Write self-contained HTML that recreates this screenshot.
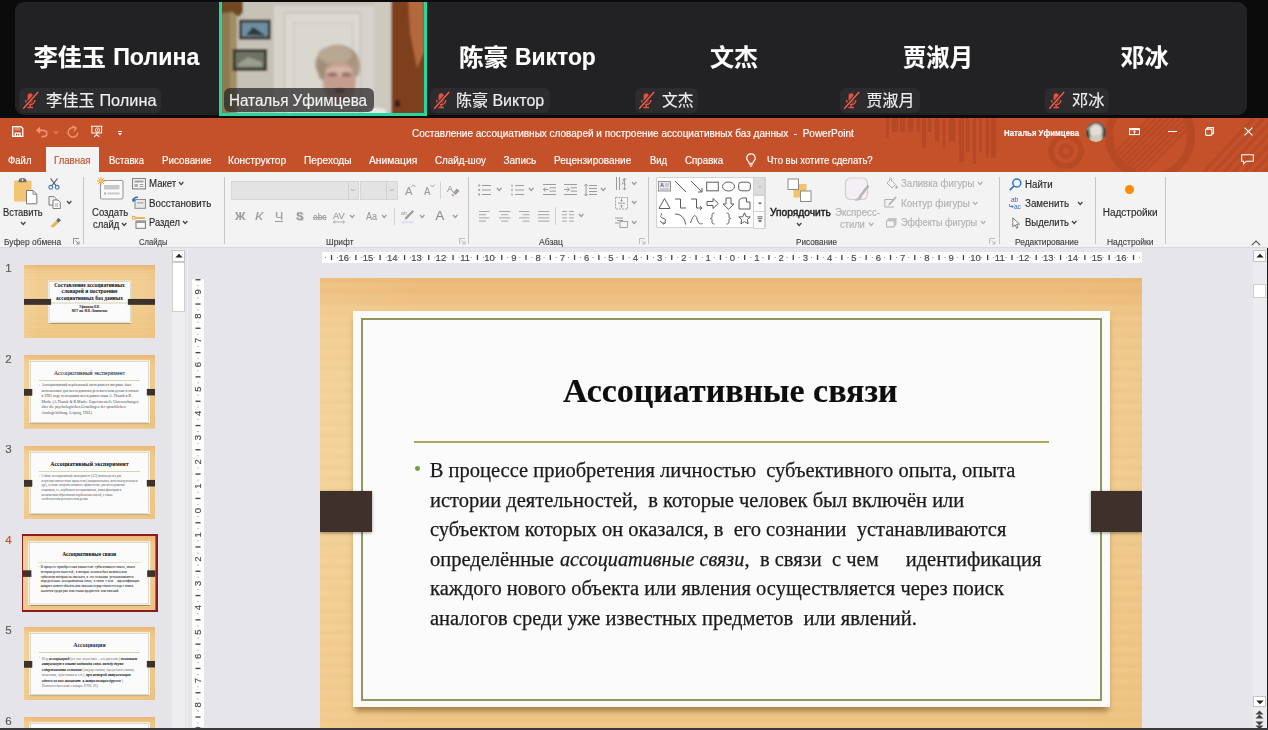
<!DOCTYPE html>
<html lang="ru">
<head>
<meta charset="utf-8">
<title>Zoom — PowerPoint</title>
<style>
*{box-sizing:border-box;margin:0;padding:0}
html,body{width:1268px;height:730px;overflow:hidden;background:#0b0b0c}
body{position:relative;font-family:"Liberation Sans","Noto Sans CJK SC",sans-serif}
#root{position:absolute;left:0;top:0;width:1268px;height:730px;overflow:hidden;filter:blur(0.6px)}
.r{position:absolute;display:block}
.t{position:absolute;display:block;white-space:pre;transform-origin:0 50%;-webkit-text-stroke:0.150px currentColor}
svg{overflow:visible}
</style>
</head>
<body>
<div id="root">
<div class="r" style="left:15.0px;top:2.0px;width:1232.0px;height:113.0px;background:#222224;border-radius:9px;"></div>
<span class="t" style="left:33.7px;top:43.6px;font-size:24px;line-height:28.8px;color:#ffffff;font-weight:bold;">李佳玉</span>
<span class="t" style="left:113.2px;top:44.3px;font-size:23.2px;line-height:27.8px;color:#ffffff;font-weight:bold;">Полина</span>
<div class="r" style="left:19.0px;top:88.0px;width:142.0px;height:25.0px;background:#2c2c2e;border-radius:6px;"></div>
<svg class="r" style="left:21.0px;top:91.0px;" width="19" height="19" viewBox="0 0 19 19"><path d="M9.200 2.200c1.500 0 2.600 1.100 2.600 2.600v4.400c0 1.500-1.100 2.600-2.600 2.600S6.600 10.700 6.600 9.200V4.800c0-1.500 1.100-2.600 2.600-2.600z" fill="#e5503f"/><path d="M4.600 9.000c0 2.600 2 4.600 4.600 4.600s4.600-2 4.600-4.600" fill="none" stroke="#e5503f" stroke-width="1.500"/><path d="M9.200 13.600v2.400M6.400 16.400h5.600" stroke="#e5503f" stroke-width="1.500" fill="none"/><path d="M16.800 1.200L2.000 17.600" stroke="#2c2c2e" stroke-width="3.200"/><path d="M17.200 1.000L2.200 17.800" stroke="#f0604f" stroke-width="1.400"/></svg>
<span class="t" style="left:45.5px;top:91.1px;font-size:16px;line-height:19.2px;color:#f0f0f0;transform:scaleX(1.018);">李佳玉 Полина</span>
<span class="t" style="left:458.8px;top:43.6px;font-size:24px;line-height:28.8px;color:#ffffff;font-weight:bold;transform:scaleX(1.025);">陈豪</span>
<span class="t" style="left:515.2px;top:44.3px;font-size:23.2px;line-height:27.8px;color:#ffffff;font-weight:bold;transform:scaleX(0.986);">Виктор</span>
<div class="r" style="left:429.5px;top:88.0px;width:120.5px;height:25.0px;background:#2c2c2e;border-radius:6px;"></div>
<svg class="r" style="left:431.5px;top:91.0px;" width="19" height="19" viewBox="0 0 19 19"><path d="M9.200 2.200c1.500 0 2.600 1.100 2.600 2.600v4.400c0 1.500-1.100 2.600-2.600 2.600S6.600 10.700 6.600 9.200V4.800c0-1.500 1.100-2.600 2.600-2.600z" fill="#e5503f"/><path d="M4.600 9.000c0 2.600 2 4.600 4.600 4.600s4.600-2 4.600-4.600" fill="none" stroke="#e5503f" stroke-width="1.500"/><path d="M9.200 13.600v2.400M6.400 16.400h5.600" stroke="#e5503f" stroke-width="1.500" fill="none"/><path d="M16.800 1.200L2.000 17.600" stroke="#2c2c2e" stroke-width="3.200"/><path d="M17.200 1.000L2.200 17.800" stroke="#f0604f" stroke-width="1.400"/></svg>
<span class="t" style="left:456.0px;top:91.1px;font-size:16px;line-height:19.2px;color:#f0f0f0;">陈豪 Виктор</span>
<span class="t" style="left:710.0px;top:43.6px;font-size:24px;line-height:28.8px;color:#ffffff;font-weight:bold;">文杰</span>
<div class="r" style="left:635.0px;top:88.0px;width:63.0px;height:25.0px;background:#2c2c2e;border-radius:6px;"></div>
<svg class="r" style="left:637.0px;top:91.0px;" width="19" height="19" viewBox="0 0 19 19"><path d="M9.200 2.200c1.500 0 2.600 1.100 2.600 2.600v4.400c0 1.500-1.100 2.600-2.600 2.600S6.600 10.700 6.600 9.200V4.800c0-1.500 1.100-2.600 2.600-2.600z" fill="#e5503f"/><path d="M4.600 9.000c0 2.600 2 4.600 4.600 4.600s4.600-2 4.600-4.600" fill="none" stroke="#e5503f" stroke-width="1.500"/><path d="M9.200 13.600v2.400M6.400 16.400h5.600" stroke="#e5503f" stroke-width="1.500" fill="none"/><path d="M16.800 1.200L2.000 17.600" stroke="#2c2c2e" stroke-width="3.200"/><path d="M17.200 1.000L2.200 17.800" stroke="#f0604f" stroke-width="1.400"/></svg>
<span class="t" style="left:661.5px;top:91.1px;font-size:16px;line-height:19.2px;color:#f0f0f0;transform:scaleX(0.984);">文杰</span>
<span class="t" style="left:903.0px;top:43.6px;font-size:24px;line-height:28.8px;color:#ffffff;font-weight:bold;transform:scaleX(0.972);">贾淑月</span>
<div class="r" style="left:840.0px;top:88.0px;width:80.0px;height:25.0px;background:#2c2c2e;border-radius:6px;"></div>
<svg class="r" style="left:842.0px;top:91.0px;" width="19" height="19" viewBox="0 0 19 19"><path d="M9.200 2.200c1.500 0 2.600 1.100 2.600 2.600v4.400c0 1.500-1.100 2.600-2.600 2.600S6.600 10.700 6.600 9.200V4.800c0-1.500 1.100-2.600 2.600-2.600z" fill="#e5503f"/><path d="M4.600 9.000c0 2.600 2 4.600 4.600 4.600s4.600-2 4.600-4.600" fill="none" stroke="#e5503f" stroke-width="1.500"/><path d="M9.200 13.600v2.400M6.400 16.400h5.600" stroke="#e5503f" stroke-width="1.500" fill="none"/><path d="M16.800 1.200L2.000 17.600" stroke="#2c2c2e" stroke-width="3.200"/><path d="M17.200 1.000L2.200 17.800" stroke="#f0604f" stroke-width="1.400"/></svg>
<span class="t" style="left:866.5px;top:91.1px;font-size:16px;line-height:19.2px;color:#f0f0f0;">贾淑月</span>
<span class="t" style="left:1120.5px;top:43.6px;font-size:24px;line-height:28.8px;color:#ffffff;font-weight:bold;">邓冰</span>
<div class="r" style="left:1045.0px;top:88.0px;width:64.0px;height:25.0px;background:#2c2c2e;border-radius:6px;"></div>
<svg class="r" style="left:1047.0px;top:91.0px;" width="19" height="19" viewBox="0 0 19 19"><path d="M9.200 2.200c1.500 0 2.600 1.100 2.600 2.600v4.400c0 1.500-1.100 2.600-2.600 2.600S6.600 10.700 6.600 9.200V4.800c0-1.500 1.100-2.600 2.600-2.600z" fill="#e5503f"/><path d="M4.600 9.000c0 2.600 2 4.600 4.600 4.600s4.600-2 4.600-4.600" fill="none" stroke="#e5503f" stroke-width="1.500"/><path d="M9.200 13.600v2.400M6.400 16.400h5.600" stroke="#e5503f" stroke-width="1.500" fill="none"/><path d="M16.800 1.200L2.000 17.600" stroke="#2c2c2e" stroke-width="3.200"/><path d="M17.200 1.000L2.200 17.800" stroke="#f0604f" stroke-width="1.400"/></svg>
<span class="t" style="left:1071.5px;top:91.1px;font-size:16px;line-height:19.2px;color:#f0f0f0;transform:scaleX(1.015);">邓冰</span>
<div class="r" style="left:219px;top:-3px;width:208px;height:119px;border:3px solid #22d8a0;overflow:hidden;background:#c6c2b7">
<svg width="202" height="113" viewBox="0 0 202 113" style="position:absolute;left:0;top:2px">
<defs><filter id="vb" x="-5%" y="-5%" width="110%" height="110%"><feGaussianBlur stdDeviation="1.200"/></filter>
<filter id="vb2" x="-20%" y="-20%" width="140%" height="140%"><feGaussianBlur stdDeviation="1.500"/></filter></defs>
<g filter="url(#vb)">
<rect x="-5" y="-5" width="212" height="125" fill="#c6c2b7"/>
<rect x="-5" y="-5" width="20" height="125" fill="#8e7a50"/>
<rect x="8" y="10" width="7" height="110" fill="#a28e62"/>
<path d="M-5 -5H21V10L17 15L10 10L-5 12z" fill="#6f4a22"/>
<rect x="51.800" y="4" width="100.200" height="116" fill="#d7d3cc"/>
<rect x="61.500" y="9.800" width="78" height="111" fill="#cbc6be"/>
<rect x="63.500" y="11.800" width="74" height="109" fill="#dcd8d2"/>
<rect x="71.400" y="19.800" width="60" height="101" fill="#cfcac3"/>
<rect x="73" y="21.400" width="56.800" height="99" fill="#dad6d0"/>
<rect x="152" y="-5" width="17.400" height="125" fill="#cdc9be"/>
<rect x="169.400" y="-5" width="40" height="125" fill="#7e3f1d"/>
<path d="M186 -5L188 30L195 66L202 50V-5z" fill="#b4683c"/>
<rect x="17" y="17.600" width="31.800" height="20" fill="#3b3933"/>
<rect x="20" y="20.600" width="25.800" height="14" fill="#6d8fa3"/>
<path d="M24 33L31 25L37 29L43 33.500z" fill="#2d3834"/>
<rect x="10.700" y="47" width="34.400" height="22" fill="#38352e"/>
<rect x="13.700" y="50" width="28.400" height="16" fill="#6e7263"/>
<path d="M16 62L26 55L40 60V64.500H16z" fill="#9a9f93"/>
<rect x="173" y="98" width="5" height="7" fill="#2a2420"/>
<path d="M140 113C143 106 156 104 164 108V113z" fill="#e9e7e3"/>
</g>
<g filter="url(#vb2)">
<ellipse cx="115.500" cy="62" rx="22" ry="19" fill="#a5937d"/>
<ellipse cx="113" cy="53" rx="17" ry="9" fill="#b7a793"/>
<ellipse cx="117.500" cy="80" rx="16.500" ry="21" fill="#c69e8f"/>
<ellipse cx="117.500" cy="69" rx="14" ry="4.500" fill="#d6b6a9"/>
<ellipse cx="110.500" cy="72.500" rx="5" ry="2.200" fill="#8f6c62"/>
<ellipse cx="124.500" cy="72.500" rx="5" ry="2.200" fill="#8f6c62"/>
<ellipse cx="117.500" cy="88.500" rx="5.500" ry="2" fill="#7b4a44"/>
<ellipse cx="100" cy="68" rx="4" ry="10" fill="#a08d78"/>
<ellipse cx="134" cy="66" rx="4" ry="9" fill="#ab9883"/>
</g>
</svg>
<div style="position:absolute;left:2px;top:88px;width:150px;height:23.500px;border-radius:6px;background:rgba(36,36,38,0.720)"></div>
</div>
<span class="t" style="left:228.5px;top:90.5px;font-size:16px;line-height:19.2px;color:#f2f2f2;transform:scaleX(0.950);">Наталья Уфимцева</span>
<div class="r" style="left:0.0px;top:0.0px;width:1268.0px;height:2.0px;background:#0b0b0c;"></div>
<div class="r" style="left:0.0px;top:248.0px;width:1268.0px;height:482.0px;background:#e5e5ea;"></div>
<div class="r" style="left:0.0px;top:248.0px;width:187.0px;height:482.0px;background:#e4e4e9;"></div>
<div class="r" style="left:172.0px;top:249.0px;width:13.0px;height:481.0px;background:#eeeef0;"></div>
<div class="r" style="left:186.5px;top:248.0px;width:1.0px;height:482.0px;background:#efeff1;"></div>
<div class="r" style="left:172.0px;top:249.5px;width:12.5px;height:12.2px;background:#ffffff;border:1px solid #c4c4c4;"></div>
<svg class="r" style="left:174.5px;top:253.0px;" width="8" height="5" viewBox="0 0 8 5"><path d="M0.300 4.500L4 0.800L7.700 4.500z" fill="#222"/></svg>
<div class="r" style="left:172.0px;top:262.0px;width:12.5px;height:49.5px;background:#ffffff;border:1px solid #cfcfcf;"></div>
<div class="r" style="left:21.8px;top:534.2px;width:136.0px;height:78.2px;background:#8c1c22;"></div>
<div class="r" style="left:24px;top:264.8px;width:131px;height:73.6px;overflow:hidden"><div class="r" style="left:0;top:0;width:822px;height:462px;transform:scale(0.15937);transform-origin:0 0"><div class="r" style="left:0;top:0;width:822px;height:462px;background:linear-gradient(180deg,#ecb977 0%,#edbd7d 3.500%,#efc687 6.500%,#f0cb8e 11%,#f1ce92 22%,#f1cf93 45%,#f0ca8b 70%,#efc684 100%);"></div><div class="r" style="left:0;top:0;width:822px;height:462px;background:repeating-linear-gradient(180deg,rgba(214,150,80,0.00) 0px,rgba(214,150,80,0.06) 3px,rgba(255,240,210,0.07) 7px,rgba(214,150,80,0.00) 11px);"></div><div class="r" style="left:0;top:0;width:822px;height:462px;background:linear-gradient(90deg,rgba(255,236,200,0.12) 0%,rgba(255,236,200,0) 12%,rgba(230,170,100,0) 90%,rgba(226,160,90,0.10) 100%)"></div><div class="r" style="left:150px;top:98px;width:523.0px;height:267.0px;background:#fbfbfc;box-shadow:0 6px 6px -2px rgba(90,50,10,0.50)"></div><div class="r" style="left:156px;top:104px;width:511.0px;height:255.0px;border:2.200px solid #92965f"></div><div class="r" style="left:0px;top:213px;width:170.0px;height:37.0px;background:#3e302b;box-shadow:0 1px 3px rgba(0,0,0,0.4)"></div><div class="r" style="left:652px;top:213px;width:170.0px;height:37.0px;background:#3e302b;box-shadow:0 1px 3px rgba(0,0,0,0.4)"></div><span class="t" style="left:0;width:822px;text-align:center;top:107.5px;font-size:34px;line-height:34px;color:#111;font-family:'Liberation Serif','Noto Serif CJK SC',serif;font-weight:bold">Составление ассоциативных</span>
<span class="t" style="left:0;width:822px;text-align:center;top:148.5px;font-size:34px;line-height:34px;color:#111;font-family:'Liberation Serif','Noto Serif CJK SC',serif;font-weight:bold">словарей и построение</span>
<span class="t" style="left:0;width:822px;text-align:center;top:188.5px;font-size:34px;line-height:34px;color:#111;font-family:'Liberation Serif','Noto Serif CJK SC',serif;font-weight:bold">ассоциативных баз данных</span>
<div class="r" style="left:170.0px;top:237.0px;width:482.0px;height:3.0px;background:#a7a85e;"></div>
<span class="t" style="left:0;width:822px;text-align:center;top:252.5px;font-size:18.5px;line-height:18.5px;color:#111;font-family:'Liberation Serif','Noto Serif CJK SC',serif;font-weight:bold">Уфимцева Н.В.</span>
<span class="t" style="left:0;width:822px;text-align:center;top:282.5px;font-size:18.5px;line-height:18.5px;color:#111;font-family:'Liberation Serif','Noto Serif CJK SC',serif;font-weight:bold">МГУ им. М.В. Ломоносова</span>
</div></div>
<span class="t" style="left:5.3px;top:262.3px;font-size:11.5px;line-height:13.8px;color:#5a5a5a;">1</span>
<div class="r" style="left:24px;top:355.3px;width:131px;height:73.6px;overflow:hidden"><div class="r" style="left:0;top:0;width:822px;height:462px;transform:scale(0.15937);transform-origin:0 0"><div class="r" style="left:0;top:0;width:822px;height:462px;background:linear-gradient(180deg,#ecb977 0%,#edbd7d 3.500%,#efc687 6.500%,#f0cb8e 11%,#f1ce92 22%,#f1cf93 45%,#f0ca8b 70%,#efc684 100%);"></div><div class="r" style="left:0;top:0;width:822px;height:462px;background:repeating-linear-gradient(180deg,rgba(214,150,80,0.00) 0px,rgba(214,150,80,0.06) 3px,rgba(255,240,210,0.07) 7px,rgba(214,150,80,0.00) 11px);"></div><div class="r" style="left:0;top:0;width:822px;height:462px;background:linear-gradient(90deg,rgba(255,236,200,0.12) 0%,rgba(255,236,200,0) 12%,rgba(230,170,100,0) 90%,rgba(226,160,90,0.10) 100%)"></div><div class="r" style="left:33.2px;top:33px;width:757.1px;height:395.7px;background:#fbfbfc;box-shadow:0 6px 6px -2px rgba(90,50,10,0.50)"></div><div class="r" style="left:40.6px;top:40.4px;width:741.2px;height:382.2px;border:2.200px solid #92965f"></div><div class="r" style="left:0px;top:213px;width:52.3px;height:41.0px;background:#3e302b;box-shadow:0 1px 3px rgba(0,0,0,0.4)"></div><div class="r" style="left:771.3px;top:213px;width:50.7px;height:41.0px;background:#3e302b;box-shadow:0 1px 3px rgba(0,0,0,0.4)"></div><span class="t" style="left:0;width:822px;text-align:center;top:93.8px;font-size:36px;line-height:36px;color:#222;font-family:'Liberation Serif','Noto Serif CJK SC',serif;font-weight:normal">Ассоциативный эксперимент</span>
<div class="r" style="left:94.0px;top:160.0px;width:634.0px;height:2.5px;background:#a7a85e;"></div>
<div class="r" style="left:96.0px;top:186.0px;width:5.0px;height:5.0px;background:#6fa13f;border-radius:50%;"></div>
<span class="t" style="left:110px;top:174.9px;font-size:24px;line-height:24px;color:#555;font-family:'Liberation Serif','Noto Serif CJK SC',serif;">Ассоциативный вербальный эксперимент впервые был</span>
<span class="t" style="left:110px;top:209.9px;font-size:24px;line-height:24px;color:#555;font-family:'Liberation Serif','Noto Serif CJK SC',serif;">использован для исследования речевого поведения в начале</span>
<span class="t" style="left:110px;top:244.9px;font-size:24px;line-height:24px;color:#555;font-family:'Liberation Serif','Noto Serif CJK SC',serif;">в 1901 году немецкими исследователями A. Thumb и K.</span>
<span class="t" style="left:110px;top:279.9px;font-size:24px;line-height:24px;color:#555;font-family:'Liberation Serif','Noto Serif CJK SC',serif;">Marbe (A.Thumb &amp; K.Marbe. Experimentelle Untersuchungen</span>
<span class="t" style="left:110px;top:314.9px;font-size:24px;line-height:24px;color:#555;font-family:'Liberation Serif','Noto Serif CJK SC',serif;">über die psychologischen Grundlagen der sprachlichen</span>
<span class="t" style="left:110px;top:349.9px;font-size:24px;line-height:24px;color:#555;font-family:'Liberation Serif','Noto Serif CJK SC',serif;">Analogiebildung. Leipzig, 1901).</span>
</div></div>
<span class="t" style="left:5.3px;top:352.8px;font-size:11.5px;line-height:13.8px;color:#5a5a5a;">2</span>
<div class="r" style="left:24px;top:445.8px;width:131px;height:73.6px;overflow:hidden"><div class="r" style="left:0;top:0;width:822px;height:462px;transform:scale(0.15937);transform-origin:0 0"><div class="r" style="left:0;top:0;width:822px;height:462px;background:linear-gradient(180deg,#ecb977 0%,#edbd7d 3.500%,#efc687 6.500%,#f0cb8e 11%,#f1ce92 22%,#f1cf93 45%,#f0ca8b 70%,#efc684 100%);"></div><div class="r" style="left:0;top:0;width:822px;height:462px;background:repeating-linear-gradient(180deg,rgba(214,150,80,0.00) 0px,rgba(214,150,80,0.06) 3px,rgba(255,240,210,0.07) 7px,rgba(214,150,80,0.00) 11px);"></div><div class="r" style="left:0;top:0;width:822px;height:462px;background:linear-gradient(90deg,rgba(255,236,200,0.12) 0%,rgba(255,236,200,0) 12%,rgba(230,170,100,0) 90%,rgba(226,160,90,0.10) 100%)"></div><div class="r" style="left:33.2px;top:33px;width:757.1px;height:395.7px;background:#fbfbfc;box-shadow:0 6px 6px -2px rgba(90,50,10,0.50)"></div><div class="r" style="left:40.6px;top:40.4px;width:741.2px;height:382.2px;border:2.200px solid #92965f"></div><div class="r" style="left:0px;top:213px;width:52.3px;height:41.0px;background:#3e302b;box-shadow:0 1px 3px rgba(0,0,0,0.4)"></div><div class="r" style="left:771.3px;top:213px;width:50.7px;height:41.0px;background:#3e302b;box-shadow:0 1px 3px rgba(0,0,0,0.4)"></div><span class="t" style="left:0;width:822px;text-align:center;top:93.0px;font-size:37px;line-height:37px;color:#111;font-family:'Liberation Serif','Noto Serif CJK SC',serif;font-weight:bold">Ассоциативный эксперимент</span>
<div class="r" style="left:94.0px;top:160.0px;width:634.0px;height:2.5px;background:#a7a85e;"></div>
<div class="r" style="left:96.0px;top:186.0px;width:5.0px;height:5.0px;background:#6fa13f;border-radius:50%;"></div>
<span class="t" style="left:110px;top:177.4px;font-size:19.8px;line-height:19.8px;color:#666;font-family:'Liberation Serif','Noto Serif CJK SC',serif;">Сейчас ассоциативный эксперимент (АЭ) используется для</span>
<span class="t" style="left:110px;top:206.7px;font-size:19.8px;line-height:19.8px;color:#666;font-family:'Liberation Serif','Noto Serif CJK SC',serif;">изучения личностных процессов (эмоциональных, интеллектуальных и</span>
<span class="t" style="left:110px;top:236.0px;font-size:19.8px;line-height:19.8px;color:#666;font-family:'Liberation Serif','Noto Serif CJK SC',serif;">др.), а также получил активное применение для исследования</span>
<span class="t" style="left:110px;top:265.3px;font-size:19.8px;line-height:19.8px;color:#666;font-family:'Liberation Serif','Noto Serif CJK SC',serif;">языковых, т.е. вербально-ассоциативных, иным факторам и</span>
<span class="t" style="left:110px;top:294.6px;font-size:19.8px;line-height:19.8px;color:#666;font-family:'Liberation Serif','Noto Serif CJK SC',serif;">механизмам образования вербальных связей, а также</span>
<span class="t" style="left:110px;top:323.9px;font-size:19.8px;line-height:19.8px;color:#666;font-family:'Liberation Serif','Noto Serif CJK SC',serif;">особенностям речевого поведения.</span>
</div></div>
<span class="t" style="left:5.3px;top:443.3px;font-size:11.5px;line-height:13.8px;color:#5a5a5a;">3</span>
<div class="r" style="left:23.4px;top:536.0px;width:132.4px;height:74.4px;overflow:hidden"><div class="r" style="left:0;top:0;width:822px;height:462px;transform:scale(0.16107);transform-origin:0 0"><div class="r" style="left:0;top:0;width:822px;height:462px;background:linear-gradient(180deg,#ecb977 0%,#edbd7d 3.500%,#efc687 6.500%,#f0cb8e 11%,#f1ce92 22%,#f1cf93 45%,#f0ca8b 70%,#efc684 100%);"></div><div class="r" style="left:0;top:0;width:822px;height:462px;background:repeating-linear-gradient(180deg,rgba(214,150,80,0.00) 0px,rgba(214,150,80,0.06) 3px,rgba(255,240,210,0.07) 7px,rgba(214,150,80,0.00) 11px);"></div><div class="r" style="left:0;top:0;width:822px;height:462px;background:linear-gradient(90deg,rgba(255,236,200,0.12) 0%,rgba(255,236,200,0) 12%,rgba(230,170,100,0) 90%,rgba(226,160,90,0.10) 100%)"></div><div class="r" style="left:33.2px;top:33px;width:757.1px;height:395.7px;background:#fbfbfc;box-shadow:0 6px 6px -2px rgba(90,50,10,0.50)"></div><div class="r" style="left:40.6px;top:40.4px;width:741.2px;height:382.2px;border:2.200px solid #92965f"></div><div class="r" style="left:0px;top:213px;width:52.3px;height:41.0px;background:#3e302b;box-shadow:0 1px 3px rgba(0,0,0,0.4)"></div><div class="r" style="left:771.3px;top:213px;width:50.7px;height:41.0px;background:#3e302b;box-shadow:0 1px 3px rgba(0,0,0,0.4)"></div><span class="t" style="left:243.4px;top:96.86px;font-size:33px;line-height:33px;color:#0d0d0d;font-weight:bold;font-family:'Liberation Serif','Noto Serif CJK SC',serif;transform:scaleX(1.0284);">Ассоциативные связи</span>
<div class="r" style="left:94.4px;top:163.2px;width:634.4px;height:1.6px;background:#a7a85e;"></div>
<div class="r" style="left:95.4px;top:188.4px;width:4.8px;height:4.8px;background:#6fa13f;border-radius:50%;"></div>
<span class="t" style="left:109.7px;top:181.93px;font-size:20.5px;line-height:20.5px;color:#1a1a1a;font-family:'Liberation Serif','Noto Serif CJK SC',serif;-webkit-text-stroke:0.250px #1a1a1a;">В процессе приобретения личностью  субъективного опыта, опыта</span>
<span class="t" style="left:110.0px;top:211.53px;font-size:20.5px;line-height:20.5px;color:#1a1a1a;font-family:'Liberation Serif','Noto Serif CJK SC',serif;-webkit-text-stroke:0.250px #1a1a1a;">истории деятельностей,  в которые человек был включён или</span>
<span class="t" style="left:110.0px;top:241.03px;font-size:20.5px;line-height:20.5px;color:#1a1a1a;font-family:'Liberation Serif','Noto Serif CJK SC',serif;-webkit-text-stroke:0.250px #1a1a1a;">субъектом которых он оказался, в  его сознании  устанавливаются</span>
<span class="t" style="left:110.0px;top:270.63px;font-size:20.5px;line-height:20.5px;color:#1a1a1a;font-family:'Liberation Serif','Noto Serif CJK SC',serif;-webkit-text-stroke:0.250px #1a1a1a;">определённые</span>
<span class="t" style="left:239.8px;top:270.63px;font-size:20.5px;line-height:20.5px;color:#1a1a1a;font-style:italic;font-family:'Liberation Serif','Noto Serif CJK SC',serif;transform:scaleX(0.9877);-webkit-text-stroke:0.250px #1a1a1a;">ассоциативные связи</span>
<span class="t" style="left:424.6px;top:270.63px;font-size:20.5px;line-height:20.5px;color:#1a1a1a;font-family:'Liberation Serif','Noto Serif CJK SC',serif;-webkit-text-stroke:0.250px #1a1a1a;">,  в связи  с чем</span>
<span class="t" style="left:585.7px;top:270.63px;font-size:20.5px;line-height:20.5px;color:#1a1a1a;font-family:'Liberation Serif','Noto Serif CJK SC',serif;-webkit-text-stroke:0.250px #1a1a1a;">идентификация</span>
<span class="t" style="left:110.0px;top:300.13px;font-size:20.5px;line-height:20.5px;color:#1a1a1a;font-family:'Liberation Serif','Noto Serif CJK SC',serif;-webkit-text-stroke:0.250px #1a1a1a;">каждого нового объекта или явления осуществляется через поиск</span>
<span class="t" style="left:110.0px;top:329.73px;font-size:20.5px;line-height:20.5px;color:#1a1a1a;font-family:'Liberation Serif','Noto Serif CJK SC',serif;-webkit-text-stroke:0.250px #1a1a1a;">аналогов среди уже известных предметов  или явлений.</span>
</div></div>
<span class="t" style="left:5.3px;top:533.8px;font-size:11.5px;line-height:13.8px;color:#d2492a;">4</span>
<div class="r" style="left:24px;top:626.8px;width:131px;height:73.6px;overflow:hidden"><div class="r" style="left:0;top:0;width:822px;height:462px;transform:scale(0.15937);transform-origin:0 0"><div class="r" style="left:0;top:0;width:822px;height:462px;background:linear-gradient(180deg,#ecb977 0%,#edbd7d 3.500%,#efc687 6.500%,#f0cb8e 11%,#f1ce92 22%,#f1cf93 45%,#f0ca8b 70%,#efc684 100%);"></div><div class="r" style="left:0;top:0;width:822px;height:462px;background:repeating-linear-gradient(180deg,rgba(214,150,80,0.00) 0px,rgba(214,150,80,0.06) 3px,rgba(255,240,210,0.07) 7px,rgba(214,150,80,0.00) 11px);"></div><div class="r" style="left:0;top:0;width:822px;height:462px;background:linear-gradient(90deg,rgba(255,236,200,0.12) 0%,rgba(255,236,200,0) 12%,rgba(230,170,100,0) 90%,rgba(226,160,90,0.10) 100%)"></div><div class="r" style="left:33.2px;top:33px;width:757.1px;height:395.7px;background:#fbfbfc;box-shadow:0 6px 6px -2px rgba(90,50,10,0.50)"></div><div class="r" style="left:40.6px;top:40.4px;width:741.2px;height:382.2px;border:2.200px solid #92965f"></div><div class="r" style="left:0px;top:213px;width:52.3px;height:41.0px;background:#3e302b;box-shadow:0 1px 3px rgba(0,0,0,0.4)"></div><div class="r" style="left:771.3px;top:213px;width:50.7px;height:41.0px;background:#3e302b;box-shadow:0 1px 3px rgba(0,0,0,0.4)"></div><span class="t" style="left:0;width:822px;text-align:center;top:92.6px;font-size:37.5px;line-height:37.5px;color:#333;font-family:'Liberation Serif','Noto Serif CJK SC',serif;font-weight:bold">Ассоциация</span>
<div class="r" style="left:94.0px;top:160.0px;width:634.0px;height:2.5px;background:#a7a85e;"></div>
<div class="r" style="left:96.0px;top:186.0px;width:5.0px;height:5.0px;background:#6fa13f;border-radius:50%;"></div>
<span class="t" style="left:112px;top:185.7px;font-size:23px;line-height:23px;color:#777;font-family:'Liberation Serif','Noto Serif CJK SC',serif;">Под <b style="color:#111;font-style:italic">ассоциацией</b> (от лат. associatio – соединение) <b style="color:#111;font-style:italic">понимаем</b></span>
<span class="t" style="left:112px;top:220.1px;font-size:23px;line-height:23px;color:#777;font-family:'Liberation Serif','Noto Serif CJK SC',serif;"><b style="color:#111;font-style:italic">актуальную в опыте индивида связь между двумя</b></span>
<span class="t" style="left:112px;top:254.5px;font-size:23px;line-height:23px;color:#777;font-family:'Liberation Serif','Noto Serif CJK SC',serif;"><b style="color:#111;font-style:italic">содержаниями сознания</b> (ощущениями, представлениями,</span>
<span class="t" style="left:112px;top:288.9px;font-size:23px;line-height:23px;color:#777;font-family:'Liberation Serif','Noto Serif CJK SC',serif;">мыслями, чувствами и т.п.), <b style="color:#111;font-style:italic">при которой актуализация</b></span>
<span class="t" style="left:112px;top:323.3px;font-size:23px;line-height:23px;color:#777;font-family:'Liberation Serif','Noto Serif CJK SC',serif;"><b style="color:#111;font-style:italic">одного из них вызывает  к актуализации другого</b> (</span>
<span class="t" style="left:112px;top:357.7px;font-size:23px;line-height:23px;color:#777;font-family:'Liberation Serif','Noto Serif CJK SC',serif;">Психологический словарь 1990: 28).</span>
</div></div>
<span class="t" style="left:5.3px;top:624.3px;font-size:11.5px;line-height:13.8px;color:#5a5a5a;">5</span>
<div class="r" style="left:24px;top:717.3px;width:131px;height:73.6px;overflow:hidden"><div class="r" style="left:0;top:0;width:822px;height:462px;transform:scale(0.15937);transform-origin:0 0"><div class="r" style="left:0;top:0;width:822px;height:462px;background:linear-gradient(180deg,#ecb977 0%,#edbd7d 3.500%,#efc687 6.500%,#f0cb8e 11%,#f1ce92 22%,#f1cf93 45%,#f0ca8b 70%,#efc684 100%);"></div><div class="r" style="left:0;top:0;width:822px;height:462px;background:repeating-linear-gradient(180deg,rgba(214,150,80,0.00) 0px,rgba(214,150,80,0.06) 3px,rgba(255,240,210,0.07) 7px,rgba(214,150,80,0.00) 11px);"></div><div class="r" style="left:0;top:0;width:822px;height:462px;background:linear-gradient(90deg,rgba(255,236,200,0.12) 0%,rgba(255,236,200,0) 12%,rgba(230,170,100,0) 90%,rgba(226,160,90,0.10) 100%)"></div><div class="r" style="left:33.2px;top:33px;width:757.1px;height:395.7px;background:#fbfbfc;box-shadow:0 6px 6px -2px rgba(90,50,10,0.50)"></div><div class="r" style="left:40.6px;top:40.4px;width:741.2px;height:382.2px;border:2.200px solid #92965f"></div><div class="r" style="left:0px;top:213px;width:52.3px;height:41.0px;background:#3e302b;box-shadow:0 1px 3px rgba(0,0,0,0.4)"></div><div class="r" style="left:771.3px;top:213px;width:50.7px;height:41.0px;background:#3e302b;box-shadow:0 1px 3px rgba(0,0,0,0.4)"></div></div></div>
<span class="t" style="left:5.3px;top:714.8px;font-size:11.5px;line-height:13.8px;color:#5a5a5a;">6</span>
<div class="r" style="left:321.6px;top:251.8px;width:820.2px;height:11.0px;background:#fdfdfd;"></div>
<svg class="r" style="left:321.6px;top:251.8px;" width="820.2" height="11.0" viewBox="0 0 820.2 11.0"><rect x="8.9" y="3.0" width="1.300" height="5" fill="#444"/><rect x="3.0" y="5.0" width="1" height="1" fill="#8a8a8a"/><rect x="15.1" y="5.0" width="1" height="1" fill="#8a8a8a"/><text x="21.7" y="8.9" font-size="9.500" text-anchor="middle" fill="#484848" stroke="#484848" stroke-width="0.150" font-family="Liberation Sans, sans-serif">16</text><rect x="33.2" y="3.0" width="1.300" height="5" fill="#444"/><rect x="27.3" y="5.0" width="1" height="1" fill="#8a8a8a"/><rect x="39.4" y="5.0" width="1" height="1" fill="#8a8a8a"/><text x="46.0" y="8.9" font-size="9.500" text-anchor="middle" fill="#484848" stroke="#484848" stroke-width="0.150" font-family="Liberation Sans, sans-serif">15</text><rect x="57.5" y="3.0" width="1.300" height="5" fill="#444"/><rect x="51.6" y="5.0" width="1" height="1" fill="#8a8a8a"/><rect x="63.7" y="5.0" width="1" height="1" fill="#8a8a8a"/><text x="70.3" y="8.9" font-size="9.500" text-anchor="middle" fill="#484848" stroke="#484848" stroke-width="0.150" font-family="Liberation Sans, sans-serif">14</text><rect x="81.9" y="3.0" width="1.300" height="5" fill="#444"/><rect x="75.9" y="5.0" width="1" height="1" fill="#8a8a8a"/><rect x="88.0" y="5.0" width="1" height="1" fill="#8a8a8a"/><text x="94.6" y="8.9" font-size="9.500" text-anchor="middle" fill="#484848" stroke="#484848" stroke-width="0.150" font-family="Liberation Sans, sans-serif">13</text><rect x="106.1" y="3.0" width="1.300" height="5" fill="#444"/><rect x="100.2" y="5.0" width="1" height="1" fill="#8a8a8a"/><rect x="112.3" y="5.0" width="1" height="1" fill="#8a8a8a"/><text x="118.9" y="8.9" font-size="9.500" text-anchor="middle" fill="#484848" stroke="#484848" stroke-width="0.150" font-family="Liberation Sans, sans-serif">12</text><rect x="130.4" y="3.0" width="1.300" height="5" fill="#444"/><rect x="124.5" y="5.0" width="1" height="1" fill="#8a8a8a"/><rect x="136.6" y="5.0" width="1" height="1" fill="#8a8a8a"/><text x="143.2" y="8.9" font-size="9.500" text-anchor="middle" fill="#484848" stroke="#484848" stroke-width="0.150" font-family="Liberation Sans, sans-serif">11</text><rect x="154.8" y="3.0" width="1.300" height="5" fill="#444"/><rect x="148.8" y="5.0" width="1" height="1" fill="#8a8a8a"/><rect x="160.9" y="5.0" width="1" height="1" fill="#8a8a8a"/><text x="167.5" y="8.9" font-size="9.500" text-anchor="middle" fill="#484848" stroke="#484848" stroke-width="0.150" font-family="Liberation Sans, sans-serif">10</text><rect x="179.1" y="3.0" width="1.300" height="5" fill="#444"/><rect x="173.1" y="5.0" width="1" height="1" fill="#8a8a8a"/><rect x="185.2" y="5.0" width="1" height="1" fill="#8a8a8a"/><text x="191.8" y="8.9" font-size="9.500" text-anchor="middle" fill="#484848" stroke="#484848" stroke-width="0.150" font-family="Liberation Sans, sans-serif">9</text><rect x="203.3" y="3.0" width="1.300" height="5" fill="#444"/><rect x="197.4" y="5.0" width="1" height="1" fill="#8a8a8a"/><rect x="209.5" y="5.0" width="1" height="1" fill="#8a8a8a"/><text x="216.1" y="8.9" font-size="9.500" text-anchor="middle" fill="#484848" stroke="#484848" stroke-width="0.150" font-family="Liberation Sans, sans-serif">8</text><rect x="227.7" y="3.0" width="1.300" height="5" fill="#444"/><rect x="221.7" y="5.0" width="1" height="1" fill="#8a8a8a"/><rect x="233.8" y="5.0" width="1" height="1" fill="#8a8a8a"/><text x="240.4" y="8.9" font-size="9.500" text-anchor="middle" fill="#484848" stroke="#484848" stroke-width="0.150" font-family="Liberation Sans, sans-serif">7</text><rect x="251.9" y="3.0" width="1.300" height="5" fill="#444"/><rect x="246.0" y="5.0" width="1" height="1" fill="#8a8a8a"/><rect x="258.1" y="5.0" width="1" height="1" fill="#8a8a8a"/><text x="264.7" y="8.9" font-size="9.500" text-anchor="middle" fill="#484848" stroke="#484848" stroke-width="0.150" font-family="Liberation Sans, sans-serif">6</text><rect x="276.2" y="3.0" width="1.300" height="5" fill="#444"/><rect x="270.3" y="5.0" width="1" height="1" fill="#8a8a8a"/><rect x="282.4" y="5.0" width="1" height="1" fill="#8a8a8a"/><text x="289.0" y="8.9" font-size="9.500" text-anchor="middle" fill="#484848" stroke="#484848" stroke-width="0.150" font-family="Liberation Sans, sans-serif">5</text><rect x="300.5" y="3.0" width="1.300" height="5" fill="#444"/><rect x="294.6" y="5.0" width="1" height="1" fill="#8a8a8a"/><rect x="306.7" y="5.0" width="1" height="1" fill="#8a8a8a"/><text x="313.3" y="8.9" font-size="9.500" text-anchor="middle" fill="#484848" stroke="#484848" stroke-width="0.150" font-family="Liberation Sans, sans-serif">4</text><rect x="324.8" y="3.0" width="1.300" height="5" fill="#444"/><rect x="318.9" y="5.0" width="1" height="1" fill="#8a8a8a"/><rect x="331.0" y="5.0" width="1" height="1" fill="#8a8a8a"/><text x="337.6" y="8.9" font-size="9.500" text-anchor="middle" fill="#484848" stroke="#484848" stroke-width="0.150" font-family="Liberation Sans, sans-serif">3</text><rect x="349.1" y="3.0" width="1.300" height="5" fill="#444"/><rect x="343.2" y="5.0" width="1" height="1" fill="#8a8a8a"/><rect x="355.3" y="5.0" width="1" height="1" fill="#8a8a8a"/><text x="361.9" y="8.9" font-size="9.500" text-anchor="middle" fill="#484848" stroke="#484848" stroke-width="0.150" font-family="Liberation Sans, sans-serif">2</text><rect x="373.4" y="3.0" width="1.300" height="5" fill="#444"/><rect x="367.5" y="5.0" width="1" height="1" fill="#8a8a8a"/><rect x="379.6" y="5.0" width="1" height="1" fill="#8a8a8a"/><text x="386.2" y="8.9" font-size="9.500" text-anchor="middle" fill="#484848" stroke="#484848" stroke-width="0.150" font-family="Liberation Sans, sans-serif">1</text><rect x="397.8" y="3.0" width="1.300" height="5" fill="#444"/><rect x="391.8" y="5.0" width="1" height="1" fill="#8a8a8a"/><rect x="403.9" y="5.0" width="1" height="1" fill="#8a8a8a"/><text x="410.5" y="8.9" font-size="9.500" text-anchor="middle" fill="#484848" stroke="#484848" stroke-width="0.150" font-family="Liberation Sans, sans-serif">0</text><rect x="422.0" y="3.0" width="1.300" height="5" fill="#444"/><rect x="416.1" y="5.0" width="1" height="1" fill="#8a8a8a"/><rect x="428.2" y="5.0" width="1" height="1" fill="#8a8a8a"/><text x="434.8" y="8.9" font-size="9.500" text-anchor="middle" fill="#484848" stroke="#484848" stroke-width="0.150" font-family="Liberation Sans, sans-serif">1</text><rect x="446.3" y="3.0" width="1.300" height="5" fill="#444"/><rect x="440.4" y="5.0" width="1" height="1" fill="#8a8a8a"/><rect x="452.5" y="5.0" width="1" height="1" fill="#8a8a8a"/><text x="459.1" y="8.9" font-size="9.500" text-anchor="middle" fill="#484848" stroke="#484848" stroke-width="0.150" font-family="Liberation Sans, sans-serif">2</text><rect x="470.6" y="3.0" width="1.300" height="5" fill="#444"/><rect x="464.7" y="5.0" width="1" height="1" fill="#8a8a8a"/><rect x="476.8" y="5.0" width="1" height="1" fill="#8a8a8a"/><text x="483.4" y="8.9" font-size="9.500" text-anchor="middle" fill="#484848" stroke="#484848" stroke-width="0.150" font-family="Liberation Sans, sans-serif">3</text><rect x="494.9" y="3.0" width="1.300" height="5" fill="#444"/><rect x="489.0" y="5.0" width="1" height="1" fill="#8a8a8a"/><rect x="501.1" y="5.0" width="1" height="1" fill="#8a8a8a"/><text x="507.7" y="8.9" font-size="9.500" text-anchor="middle" fill="#484848" stroke="#484848" stroke-width="0.150" font-family="Liberation Sans, sans-serif">4</text><rect x="519.2" y="3.0" width="1.300" height="5" fill="#444"/><rect x="513.3" y="5.0" width="1" height="1" fill="#8a8a8a"/><rect x="525.4" y="5.0" width="1" height="1" fill="#8a8a8a"/><text x="532.0" y="8.9" font-size="9.500" text-anchor="middle" fill="#484848" stroke="#484848" stroke-width="0.150" font-family="Liberation Sans, sans-serif">5</text><rect x="543.5" y="3.0" width="1.300" height="5" fill="#444"/><rect x="537.6" y="5.0" width="1" height="1" fill="#8a8a8a"/><rect x="549.7" y="5.0" width="1" height="1" fill="#8a8a8a"/><text x="556.3" y="8.9" font-size="9.500" text-anchor="middle" fill="#484848" stroke="#484848" stroke-width="0.150" font-family="Liberation Sans, sans-serif">6</text><rect x="567.9" y="3.0" width="1.300" height="5" fill="#444"/><rect x="561.9" y="5.0" width="1" height="1" fill="#8a8a8a"/><rect x="574.0" y="5.0" width="1" height="1" fill="#8a8a8a"/><text x="580.6" y="8.9" font-size="9.500" text-anchor="middle" fill="#484848" stroke="#484848" stroke-width="0.150" font-family="Liberation Sans, sans-serif">7</text><rect x="592.1" y="3.0" width="1.300" height="5" fill="#444"/><rect x="586.2" y="5.0" width="1" height="1" fill="#8a8a8a"/><rect x="598.3" y="5.0" width="1" height="1" fill="#8a8a8a"/><text x="604.9" y="8.9" font-size="9.500" text-anchor="middle" fill="#484848" stroke="#484848" stroke-width="0.150" font-family="Liberation Sans, sans-serif">8</text><rect x="616.4" y="3.0" width="1.300" height="5" fill="#444"/><rect x="610.5" y="5.0" width="1" height="1" fill="#8a8a8a"/><rect x="622.6" y="5.0" width="1" height="1" fill="#8a8a8a"/><text x="629.2" y="8.9" font-size="9.500" text-anchor="middle" fill="#484848" stroke="#484848" stroke-width="0.150" font-family="Liberation Sans, sans-serif">9</text><rect x="640.8" y="3.0" width="1.300" height="5" fill="#444"/><rect x="634.8" y="5.0" width="1" height="1" fill="#8a8a8a"/><rect x="646.9" y="5.0" width="1" height="1" fill="#8a8a8a"/><text x="653.5" y="8.9" font-size="9.500" text-anchor="middle" fill="#484848" stroke="#484848" stroke-width="0.150" font-family="Liberation Sans, sans-serif">10</text><rect x="665.0" y="3.0" width="1.300" height="5" fill="#444"/><rect x="659.1" y="5.0" width="1" height="1" fill="#8a8a8a"/><rect x="671.2" y="5.0" width="1" height="1" fill="#8a8a8a"/><text x="677.8" y="8.9" font-size="9.500" text-anchor="middle" fill="#484848" stroke="#484848" stroke-width="0.150" font-family="Liberation Sans, sans-serif">11</text><rect x="689.4" y="3.0" width="1.300" height="5" fill="#444"/><rect x="683.4" y="5.0" width="1" height="1" fill="#8a8a8a"/><rect x="695.5" y="5.0" width="1" height="1" fill="#8a8a8a"/><text x="702.1" y="8.9" font-size="9.500" text-anchor="middle" fill="#484848" stroke="#484848" stroke-width="0.150" font-family="Liberation Sans, sans-serif">12</text><rect x="713.6" y="3.0" width="1.300" height="5" fill="#444"/><rect x="707.7" y="5.0" width="1" height="1" fill="#8a8a8a"/><rect x="719.8" y="5.0" width="1" height="1" fill="#8a8a8a"/><text x="726.4" y="8.9" font-size="9.500" text-anchor="middle" fill="#484848" stroke="#484848" stroke-width="0.150" font-family="Liberation Sans, sans-serif">13</text><rect x="737.9" y="3.0" width="1.300" height="5" fill="#444"/><rect x="732.0" y="5.0" width="1" height="1" fill="#8a8a8a"/><rect x="744.1" y="5.0" width="1" height="1" fill="#8a8a8a"/><text x="750.7" y="8.9" font-size="9.500" text-anchor="middle" fill="#484848" stroke="#484848" stroke-width="0.150" font-family="Liberation Sans, sans-serif">14</text><rect x="762.2" y="3.0" width="1.300" height="5" fill="#444"/><rect x="756.3" y="5.0" width="1" height="1" fill="#8a8a8a"/><rect x="768.4" y="5.0" width="1" height="1" fill="#8a8a8a"/><text x="775.0" y="8.9" font-size="9.500" text-anchor="middle" fill="#484848" stroke="#484848" stroke-width="0.150" font-family="Liberation Sans, sans-serif">15</text><rect x="786.5" y="3.0" width="1.300" height="5" fill="#444"/><rect x="780.6" y="5.0" width="1" height="1" fill="#8a8a8a"/><rect x="792.7" y="5.0" width="1" height="1" fill="#8a8a8a"/><text x="799.3" y="8.9" font-size="9.500" text-anchor="middle" fill="#484848" stroke="#484848" stroke-width="0.150" font-family="Liberation Sans, sans-serif">16</text><rect x="810.9" y="3.0" width="1.300" height="5" fill="#444"/><rect x="804.9" y="5.0" width="1" height="1" fill="#8a8a8a"/><rect x="817.0" y="5.0" width="1" height="1" fill="#8a8a8a"/></svg>
<div class="r" style="left:192.0px;top:279.3px;width:12.0px;height:448.2px;background:#fdfdfd;"></div>
<svg class="r" style="left:192.0px;top:279.3px;" width="12" height="448.2" viewBox="0 0 12 448.2"><rect x="3.5" y="0.1" width="5" height="1.300" fill="#444"/><rect x="5.5" y="6.2" width="1" height="1" fill="#8a8a8a"/><text transform="translate(9.4,12.8) rotate(-90)" font-size="9.500" text-anchor="middle" fill="#484848" stroke="#484848" stroke-width="0.150" font-family="Liberation Sans, sans-serif">9</text><rect x="3.5" y="24.4" width="5" height="1.300" fill="#444"/><rect x="5.5" y="18.4" width="1" height="1" fill="#8a8a8a"/><rect x="5.5" y="30.5" width="1" height="1" fill="#8a8a8a"/><text transform="translate(9.4,37.1) rotate(-90)" font-size="9.500" text-anchor="middle" fill="#484848" stroke="#484848" stroke-width="0.150" font-family="Liberation Sans, sans-serif">8</text><rect x="3.5" y="48.6" width="5" height="1.300" fill="#444"/><rect x="5.5" y="42.7" width="1" height="1" fill="#8a8a8a"/><rect x="5.5" y="54.8" width="1" height="1" fill="#8a8a8a"/><text transform="translate(9.4,61.4) rotate(-90)" font-size="9.500" text-anchor="middle" fill="#484848" stroke="#484848" stroke-width="0.150" font-family="Liberation Sans, sans-serif">7</text><rect x="3.5" y="73.0" width="5" height="1.300" fill="#444"/><rect x="5.5" y="67.0" width="1" height="1" fill="#8a8a8a"/><rect x="5.5" y="79.1" width="1" height="1" fill="#8a8a8a"/><text transform="translate(9.4,85.7) rotate(-90)" font-size="9.500" text-anchor="middle" fill="#484848" stroke="#484848" stroke-width="0.150" font-family="Liberation Sans, sans-serif">6</text><rect x="3.5" y="97.2" width="5" height="1.300" fill="#444"/><rect x="5.5" y="91.3" width="1" height="1" fill="#8a8a8a"/><rect x="5.5" y="103.4" width="1" height="1" fill="#8a8a8a"/><text transform="translate(9.4,110.0) rotate(-90)" font-size="9.500" text-anchor="middle" fill="#484848" stroke="#484848" stroke-width="0.150" font-family="Liberation Sans, sans-serif">5</text><rect x="3.5" y="121.6" width="5" height="1.300" fill="#444"/><rect x="5.5" y="115.6" width="1" height="1" fill="#8a8a8a"/><rect x="5.5" y="127.7" width="1" height="1" fill="#8a8a8a"/><text transform="translate(9.4,134.3) rotate(-90)" font-size="9.500" text-anchor="middle" fill="#484848" stroke="#484848" stroke-width="0.150" font-family="Liberation Sans, sans-serif">4</text><rect x="3.5" y="145.9" width="5" height="1.300" fill="#444"/><rect x="5.5" y="139.9" width="1" height="1" fill="#8a8a8a"/><rect x="5.5" y="152.0" width="1" height="1" fill="#8a8a8a"/><text transform="translate(9.4,158.6) rotate(-90)" font-size="9.500" text-anchor="middle" fill="#484848" stroke="#484848" stroke-width="0.150" font-family="Liberation Sans, sans-serif">3</text><rect x="3.5" y="170.1" width="5" height="1.300" fill="#444"/><rect x="5.5" y="164.2" width="1" height="1" fill="#8a8a8a"/><rect x="5.5" y="176.3" width="1" height="1" fill="#8a8a8a"/><text transform="translate(9.4,182.9) rotate(-90)" font-size="9.500" text-anchor="middle" fill="#484848" stroke="#484848" stroke-width="0.150" font-family="Liberation Sans, sans-serif">2</text><rect x="3.5" y="194.4" width="5" height="1.300" fill="#444"/><rect x="5.5" y="188.5" width="1" height="1" fill="#8a8a8a"/><rect x="5.5" y="200.6" width="1" height="1" fill="#8a8a8a"/><text transform="translate(9.4,207.2) rotate(-90)" font-size="9.500" text-anchor="middle" fill="#484848" stroke="#484848" stroke-width="0.150" font-family="Liberation Sans, sans-serif">1</text><rect x="3.5" y="218.8" width="5" height="1.300" fill="#444"/><rect x="5.5" y="212.8" width="1" height="1" fill="#8a8a8a"/><rect x="5.5" y="224.9" width="1" height="1" fill="#8a8a8a"/><text transform="translate(9.4,231.5) rotate(-90)" font-size="9.500" text-anchor="middle" fill="#484848" stroke="#484848" stroke-width="0.150" font-family="Liberation Sans, sans-serif">0</text><rect x="3.5" y="243.1" width="5" height="1.300" fill="#444"/><rect x="5.5" y="237.1" width="1" height="1" fill="#8a8a8a"/><rect x="5.5" y="249.2" width="1" height="1" fill="#8a8a8a"/><text transform="translate(9.4,255.8) rotate(-90)" font-size="9.500" text-anchor="middle" fill="#484848" stroke="#484848" stroke-width="0.150" font-family="Liberation Sans, sans-serif">1</text><rect x="3.5" y="267.3" width="5" height="1.300" fill="#444"/><rect x="5.5" y="261.4" width="1" height="1" fill="#8a8a8a"/><rect x="5.5" y="273.5" width="1" height="1" fill="#8a8a8a"/><text transform="translate(9.4,280.1) rotate(-90)" font-size="9.500" text-anchor="middle" fill="#484848" stroke="#484848" stroke-width="0.150" font-family="Liberation Sans, sans-serif">2</text><rect x="3.5" y="291.6" width="5" height="1.300" fill="#444"/><rect x="5.5" y="285.7" width="1" height="1" fill="#8a8a8a"/><rect x="5.5" y="297.8" width="1" height="1" fill="#8a8a8a"/><text transform="translate(9.4,304.4) rotate(-90)" font-size="9.500" text-anchor="middle" fill="#484848" stroke="#484848" stroke-width="0.150" font-family="Liberation Sans, sans-serif">3</text><rect x="3.5" y="315.9" width="5" height="1.300" fill="#444"/><rect x="5.5" y="310.0" width="1" height="1" fill="#8a8a8a"/><rect x="5.5" y="322.1" width="1" height="1" fill="#8a8a8a"/><text transform="translate(9.4,328.7) rotate(-90)" font-size="9.500" text-anchor="middle" fill="#484848" stroke="#484848" stroke-width="0.150" font-family="Liberation Sans, sans-serif">4</text><rect x="3.5" y="340.2" width="5" height="1.300" fill="#444"/><rect x="5.5" y="334.3" width="1" height="1" fill="#8a8a8a"/><rect x="5.5" y="346.4" width="1" height="1" fill="#8a8a8a"/><text transform="translate(9.4,353.0) rotate(-90)" font-size="9.500" text-anchor="middle" fill="#484848" stroke="#484848" stroke-width="0.150" font-family="Liberation Sans, sans-serif">5</text><rect x="3.5" y="364.5" width="5" height="1.300" fill="#444"/><rect x="5.5" y="358.6" width="1" height="1" fill="#8a8a8a"/><rect x="5.5" y="370.7" width="1" height="1" fill="#8a8a8a"/><text transform="translate(9.4,377.3) rotate(-90)" font-size="9.500" text-anchor="middle" fill="#484848" stroke="#484848" stroke-width="0.150" font-family="Liberation Sans, sans-serif">6</text><rect x="3.5" y="388.8" width="5" height="1.300" fill="#444"/><rect x="5.5" y="382.9" width="1" height="1" fill="#8a8a8a"/><rect x="5.5" y="395.0" width="1" height="1" fill="#8a8a8a"/><text transform="translate(9.4,401.6) rotate(-90)" font-size="9.500" text-anchor="middle" fill="#484848" stroke="#484848" stroke-width="0.150" font-family="Liberation Sans, sans-serif">7</text><rect x="3.5" y="413.1" width="5" height="1.300" fill="#444"/><rect x="5.5" y="407.2" width="1" height="1" fill="#8a8a8a"/><rect x="5.5" y="419.3" width="1" height="1" fill="#8a8a8a"/><text transform="translate(9.4,425.9) rotate(-90)" font-size="9.500" text-anchor="middle" fill="#484848" stroke="#484848" stroke-width="0.150" font-family="Liberation Sans, sans-serif">8</text><rect x="3.5" y="437.4" width="5" height="1.300" fill="#444"/><rect x="5.5" y="431.5" width="1" height="1" fill="#8a8a8a"/><rect x="5.5" y="443.6" width="1" height="1" fill="#8a8a8a"/><text transform="translate(9.4,450.2) rotate(-90)" font-size="9.500" text-anchor="middle" fill="#484848" stroke="#484848" stroke-width="0.150" font-family="Liberation Sans, sans-serif">9</text></svg>
<div class="r" style="left:320px;top:278px;width:822px;height:462px;overflow:hidden"><div class="r" style="left:0;top:0;width:822px;height:462px;background:linear-gradient(180deg,#ecb977 0%,#edbd7d 3.500%,#efc687 6.500%,#f0cb8e 11%,#f1ce92 22%,#f1cf93 45%,#f0ca8b 70%,#efc684 100%);"></div><div class="r" style="left:0;top:0;width:822px;height:462px;background:repeating-linear-gradient(180deg,rgba(214,150,80,0.00) 0px,rgba(214,150,80,0.06) 3px,rgba(255,240,210,0.07) 7px,rgba(214,150,80,0.00) 11px);"></div><div class="r" style="left:0;top:0;width:822px;height:462px;background:linear-gradient(90deg,rgba(255,236,200,0.12) 0%,rgba(255,236,200,0) 12%,rgba(230,170,100,0) 90%,rgba(226,160,90,0.10) 100%)"></div><div class="r" style="left:33.2px;top:33px;width:757.1px;height:395.7px;background:#fbfbfc;box-shadow:0 6px 6px -2px rgba(90,50,10,0.50)"></div><div class="r" style="left:40.6px;top:40.4px;width:741.2px;height:382.2px;border:2.200px solid #92965f"></div><div class="r" style="left:0px;top:213px;width:52.3px;height:41.0px;background:#3e302b;box-shadow:0 1px 3px rgba(0,0,0,0.4)"></div><div class="r" style="left:771.3px;top:213px;width:50.7px;height:41.0px;background:#3e302b;box-shadow:0 1px 3px rgba(0,0,0,0.4)"></div><span class="t" style="left:243.4px;top:96.86px;font-size:33px;line-height:33px;color:#0d0d0d;font-weight:bold;font-family:'Liberation Serif','Noto Serif CJK SC',serif;transform:scaleX(1.0284);">Ассоциативные связи</span>
<div class="r" style="left:94.4px;top:163.2px;width:634.4px;height:1.6px;background:#a7a85e;"></div>
<div class="r" style="left:95.4px;top:188.4px;width:4.8px;height:4.8px;background:#6fa13f;border-radius:50%;"></div>
<span class="t" style="left:109.7px;top:181.93px;font-size:20.5px;line-height:20.5px;color:#1a1a1a;font-family:'Liberation Serif','Noto Serif CJK SC',serif;-webkit-text-stroke:0.250px #1a1a1a;">В процессе приобретения личностью  субъективного опыта, опыта</span>
<span class="t" style="left:110.0px;top:211.53px;font-size:20.5px;line-height:20.5px;color:#1a1a1a;font-family:'Liberation Serif','Noto Serif CJK SC',serif;-webkit-text-stroke:0.250px #1a1a1a;">истории деятельностей,  в которые человек был включён или</span>
<span class="t" style="left:110.0px;top:241.03px;font-size:20.5px;line-height:20.5px;color:#1a1a1a;font-family:'Liberation Serif','Noto Serif CJK SC',serif;-webkit-text-stroke:0.250px #1a1a1a;">субъектом которых он оказался, в  его сознании  устанавливаются</span>
<span class="t" style="left:110.0px;top:270.63px;font-size:20.5px;line-height:20.5px;color:#1a1a1a;font-family:'Liberation Serif','Noto Serif CJK SC',serif;-webkit-text-stroke:0.250px #1a1a1a;">определённые</span>
<span class="t" style="left:239.8px;top:270.63px;font-size:20.5px;line-height:20.5px;color:#1a1a1a;font-style:italic;font-family:'Liberation Serif','Noto Serif CJK SC',serif;transform:scaleX(0.9877);-webkit-text-stroke:0.250px #1a1a1a;">ассоциативные связи</span>
<span class="t" style="left:424.6px;top:270.63px;font-size:20.5px;line-height:20.5px;color:#1a1a1a;font-family:'Liberation Serif','Noto Serif CJK SC',serif;-webkit-text-stroke:0.250px #1a1a1a;">,  в связи  с чем</span>
<span class="t" style="left:585.7px;top:270.63px;font-size:20.5px;line-height:20.5px;color:#1a1a1a;font-family:'Liberation Serif','Noto Serif CJK SC',serif;-webkit-text-stroke:0.250px #1a1a1a;">идентификация</span>
<span class="t" style="left:110.0px;top:300.13px;font-size:20.5px;line-height:20.5px;color:#1a1a1a;font-family:'Liberation Serif','Noto Serif CJK SC',serif;-webkit-text-stroke:0.250px #1a1a1a;">каждого нового объекта или явления осуществляется через поиск</span>
<span class="t" style="left:110.0px;top:329.73px;font-size:20.5px;line-height:20.5px;color:#1a1a1a;font-family:'Liberation Serif','Noto Serif CJK SC',serif;-webkit-text-stroke:0.250px #1a1a1a;">аналогов среди уже известных предметов  или явлений.</span>
</div>
<div class="r" style="left:319.0px;top:277.4px;width:824.0px;height:1.1px;background:#e5e5ea;"></div>
<div class="r" style="left:1253.0px;top:249.0px;width:13.5px;height:481.0px;background:#ececf0;"></div>
<div class="r" style="left:1253.0px;top:249.7px;width:13.0px;height:12.0px;background:#ffffff;border:1px solid #c4c4c4;"></div>
<svg class="r" style="left:1255.5px;top:253.0px;" width="8" height="5" viewBox="0 0 8 5"><path d="M0.300 4.500L4 0.800L7.700 4.500z" fill="#222"/></svg>
<div class="r" style="left:1253.0px;top:284.0px;width:13.0px;height:13.5px;background:#ffffff;border:1px solid #cfcfcf;"></div>
<div class="r" style="left:1253.0px;top:695.5px;width:13.0px;height:11.5px;background:#ffffff;border:1px solid #c4c4c4;"></div>
<svg class="r" style="left:1255.5px;top:699.5px;" width="8" height="5" viewBox="0 0 8 5"><path d="M0.300 0.500L4 4.200L7.700 0.500z" fill="#222"/></svg>
<svg class="r" style="left:1255.0px;top:710.0px;" width="9" height="9" viewBox="0 0 9 9"><path d="M0.500 4.500L4.500 0.500L8.500 4.500zM0.500 8.500L4.500 4.500L8.500 8.500z" fill="#444"/></svg>
<svg class="r" style="left:1255.0px;top:721.0px;" width="9" height="9" viewBox="0 0 9 9"><path d="M0.500 0.500L4.500 4.500L8.500 0.500zM0.500 4.500L4.500 8.500L8.500 4.500z" fill="#444"/></svg>
<div class="r" style="left:1266.6px;top:118.0px;width:1.4px;height:612.0px;background:#1c1c1c;"></div>
<div class="r" style="left:0.0px;top:728.3px;width:1268.0px;height:1.7px;background:#3a3a3c;"></div>
<div class="r" style="left:0.0px;top:118.0px;width:1268.0px;height:54.0px;background:#c4512a;"></div>
<svg class="r" style="left:0.0px;top:118.0px;overflow:hidden;" width="1268" height="54" viewBox="0 0 1268 54"><g fill="#ad4422" opacity="0.600"><rect x="886" y="0" width="3" height="20"/><rect x="892" y="0" width="6" height="14"/><rect x="900" y="0" width="5" height="14"/><rect x="908" y="0" width="5" height="14"/><rect x="917" y="0" width="3" height="14"/><rect x="922" y="0" width="4" height="30"/><rect x="928" y="0" width="3" height="14"/><rect x="935" y="0" width="4" height="24"/><rect x="943" y="0" width="2" height="30"/><rect x="949" y="0" width="6" height="24"/><rect x="959" y="0" width="5" height="44"/><rect x="966" y="0" width="3" height="34"/><rect x="973" y="0" width="3" height="46"/><rect x="979" y="0" width="3" height="34"/><rect x="986" y="0" width="3" height="40"/><rect x="991" y="0" width="5" height="40"/></g><g fill="none" stroke="#ad4422" opacity="0.550"><circle cx="1066" cy="33" r="15" stroke-width="5.500"/><circle cx="1066" cy="33" r="5.500" stroke-width="4.500"/><circle cx="1150" cy="18" r="41" stroke-width="8"/></g><defs><clipPath id="bigc"><circle cx="1150" cy="18" r="37"/></clipPath></defs><g stroke="#ad4422" stroke-width="2.500" opacity="0.450" clip-path="url(#bigc)"><path d="M1096 54L1150 0"/><path d="M1102 54L1156 0"/><path d="M1108 54L1162 0"/><path d="M1114 54L1168 0"/><path d="M1120 54L1174 0"/><path d="M1126 54L1180 0"/><path d="M1132 54L1186 0"/><path d="M1138 54L1192 0"/><path d="M1144 54L1198 0"/></g><g stroke="#ad4422" stroke-width="3.500" opacity="0.500"><path d="M1204 54L1254 0"/><path d="M1214 54L1264 0"/><path d="M1224 54L1274 0"/><path d="M1234 54L1284 0"/><path d="M1244 54L1294 0"/><path d="M1254 54L1304 0"/><path d="M1264 54L1314 0"/><path d="M1274 54L1324 0"/></g></svg>
<svg class="r" style="left:12.3px;top:126.3px;" width="12" height="11" viewBox="0 0 12 11"><path d="M0.700 0.700h8.300l1.800 1.800v7.800h-10.100z" fill="none" stroke="#ffffff" stroke-width="1.300"/><rect x="2.600" y="0.700" width="5.600" height="3.800" fill="#ffffff" opacity="0.350"/><rect x="2.600" y="6.500" width="6.200" height="3.800" fill="#ffffff"/><rect x="4" y="7.800" width="1.200" height="1.600" fill="#7a3a22"/><rect x="6.200" y="7.800" width="1.200" height="1.600" fill="#7a3a22"/></svg>
<svg class="r" style="left:35.0px;top:126.0px;" width="13" height="12" viewBox="0 0 13 12"><path d="M2.200 4.300h5.800c2.400 0 3.800 1.300 3.800 3.200s-1.400 3.100-3.800 3.100h-1.500" fill="none" stroke="#f3906c" stroke-width="1.700"/><path d="M5.200 0.600L0.800 4.300L5.200 8z" fill="#f3906c"/></svg>
<svg class="r" style="left:52.5px;top:129.8px;" width="6" height="4.5" viewBox="0 0 6 4.5"><path d="M1 1L3.0 3.5L5 1" fill="none" stroke="#f3906c" stroke-width="1"/></svg>
<svg class="r" style="left:66.0px;top:125.0px;" width="14" height="14" viewBox="0 0 14 14"><path d="M9.500 3.200A4.800 4.800 0 1 0 11.800 7.500" fill="none" stroke="#f3906c" stroke-width="1.500"/><path d="M6.300 1.000L10.200 3.000L8.000 6.500" fill="none" stroke="#f3906c" stroke-width="1.400"/></svg>
<svg class="r" style="left:89.5px;top:125.0px;" width="13.5" height="12.6" viewBox="0 0 16 15"><path d="M1 1.500h14M2.200 1.500v8h11.600v-8M8 9.500v2.500M5 14l3-2.500l3 2.500" fill="none" stroke="#ffffff" stroke-width="1.200"/><circle cx="9" cy="6" r="2.600" fill="none" stroke="#ffffff" stroke-width="1"/><path d="M8.300 4.800v2.400l2-1.200z" fill="#ffffff"/></svg>
<div class="r" style="left:118.2px;top:131.3px;width:3.6px;height:1.0px;background:#ffffff;"></div>
<svg class="r" style="left:118.0px;top:133.2px;" width="4" height="2.5" viewBox="0 0 4 2.5"><path d="M0 0h4l-2 2.500z" fill="#ffffff"/></svg>
<span class="t" style="left:412.0px;top:128.0px;font-size:10px;line-height:12.0px;color:#ffffff;">Составление ассоциативных словарей и построение ассоциативных баз данных  -  PowerPoint</span>
<span class="t" style="left:1003.5px;top:126.9px;font-size:9.4px;line-height:11.3px;color:#ffffff;font-weight:bold;transform:scaleX(0.832);">Наталья Уфимцева</span>
<svg class="r" style="left:1084.5px;top:121.0px;" width="22" height="22" viewBox="0 0 22 22"><defs><clipPath id="av"><circle cx="11" cy="11" r="10"/></clipPath><filter id="avb"><feGaussianBlur stdDeviation="0.800"/></filter></defs><g clip-path="url(#av)"><g filter="url(#avb)"><rect width="22" height="22" fill="#8d8a84"/><rect x="0" y="0" width="22" height="6" fill="#5a5f68"/><ellipse cx="11" cy="10" rx="6.500" ry="7" fill="#e4ded6"/><ellipse cx="12" cy="20" rx="9" ry="6" fill="#d0cabd"/><rect x="0" y="9" width="4.500" height="13" fill="#3e4a3c"/><rect x="17.500" y="6" width="5" height="16" fill="#4a4642"/></g></g></svg>
<svg class="r" style="left:1128.5px;top:127.5px;" width="11" height="7.2" viewBox="0 0 14 9"><rect x="0.700" y="0.700" width="12.600" height="7.600" fill="none" stroke="#ffffff" stroke-width="1.300"/><rect x="0.700" y="0.700" width="12.600" height="2" fill="#ffffff"/><path d="M7 3.800v3.500M5.200 5.300L7 3.600l1.800 1.700" fill="none" stroke="#ffffff" stroke-width="1.100"/></svg>
<div class="r" style="left:1167.5px;top:130.5px;width:9.0px;height:1.3px;background:#ffffff;"></div>
<svg class="r" style="left:1205.0px;top:127.0px;" width="9" height="9" viewBox="0 0 10 10"><rect x="0.650" y="2.400" width="6.900" height="6.900" rx="1" fill="none" stroke="#ffffff" stroke-width="1.300"/><path d="M2.600 2.200v-1.500h6.700v6.700h-1.600" fill="none" stroke="#ffffff" stroke-width="1.300"/></svg>
<svg class="r" style="left:1243.5px;top:127.0px;" width="9" height="9" viewBox="0 0 10 10"><path d="M0.600 0.600L9.400 9.400M9.400 0.600L0.600 9.400" stroke="#ffffff" stroke-width="1.300"/></svg>
<svg class="r" style="left:1241.2px;top:154.0px;" width="13" height="10.5" viewBox="0 0 15 12"><path d="M0.800 0.800h13.400v7.400h-8.200l-3 3v-3h-2.200z" fill="none" stroke="#ffffff" stroke-width="1.200"/></svg>
<div class="r" style="left:45.5px;top:147.0px;width:53.5px;height:26.0px;background:#f3f3f3;"></div>
<span class="t" style="left:7.5px;top:155.0px;font-size:10px;line-height:12.0px;color:#ffffff;transform:scaleX(0.956);">Файл</span>
<span class="t" style="left:108.5px;top:155.0px;font-size:10px;line-height:12.0px;color:#ffffff;transform:scaleX(0.939);">Вставка</span>
<span class="t" style="left:161.5px;top:155.0px;font-size:10px;line-height:12.0px;color:#ffffff;transform:scaleX(0.983);">Рисование</span>
<span class="t" style="left:228.4px;top:155.0px;font-size:10px;line-height:12.0px;color:#ffffff;transform:scaleX(1.019);">Конструктор</span>
<span class="t" style="left:304.0px;top:155.0px;font-size:10px;line-height:12.0px;color:#ffffff;transform:scaleX(1.013);">Переходы</span>
<span class="t" style="left:368.7px;top:155.0px;font-size:10px;line-height:12.0px;color:#ffffff;transform:scaleX(1.029);">Анимация</span>
<span class="t" style="left:435.0px;top:155.0px;font-size:10px;line-height:12.0px;color:#ffffff;transform:scaleX(0.984);">Слайд-шоу</span>
<span class="t" style="left:503.5px;top:155.0px;font-size:10px;line-height:12.0px;color:#ffffff;">Запись</span>
<span class="t" style="left:554.0px;top:155.0px;font-size:10px;line-height:12.0px;color:#ffffff;">Рецензирование</span>
<span class="t" style="left:650.0px;top:155.0px;font-size:10px;line-height:12.0px;color:#ffffff;transform:scaleX(0.940);">Вид</span>
<span class="t" style="left:685.0px;top:155.0px;font-size:10px;line-height:12.0px;color:#ffffff;transform:scaleX(0.976);">Справка</span>
<span class="t" style="left:767.0px;top:155.0px;font-size:10px;line-height:12.0px;color:#ffffff;transform:scaleX(0.956);">Что вы хотите сделать?</span>
<span class="t" style="left:53.5px;top:155.0px;font-size:10px;line-height:12.0px;color:#c0502c;transform:scaleX(0.959);">Главная</span>
<svg class="r" style="left:745.0px;top:153.0px;" width="12" height="14" viewBox="0 0 12 14"><path d="M6 0.800a4.300 4.300 0 0 0-2.600 7.700c0.500 0.500 0.700 1 0.700 1.700h3.800c0-0.700 0.200-1.200 0.700-1.700A4.300 4.300 0 0 0 6 0.800z" fill="none" stroke="#ffffff" stroke-width="1.100"/><path d="M4.300 11.700h3.400M4.800 13.200h2.400" stroke="#ffffff" stroke-width="1"/></svg>
<div class="r" style="left:0.0px;top:172.0px;width:1268.0px;height:76.0px;background:#f3f3f3;border-bottom:1px solid #dadada;"></div>
<div class="r" style="left:83.3px;top:176.5px;width:1.2px;height:67.0px;background:#c6c6c6;"></div>
<div class="r" style="left:223.5px;top:176.5px;width:1.2px;height:67.0px;background:#c6c6c6;"></div>
<div class="r" style="left:467.5px;top:176.5px;width:1.2px;height:67.0px;background:#c6c6c6;"></div>
<div class="r" style="left:648.0px;top:176.5px;width:1.2px;height:67.0px;background:#c6c6c6;"></div>
<div class="r" style="left:998.7px;top:176.5px;width:1.2px;height:67.0px;background:#c6c6c6;"></div>
<div class="r" style="left:1094.5px;top:176.5px;width:1.2px;height:67.0px;background:#c6c6c6;"></div>
<div class="r" style="left:1165.0px;top:176.5px;width:1.2px;height:67.0px;background:#c6c6c6;"></div>
<div class="r" style="left:439.9px;top:182.0px;width:0.9px;height:17.0px;background:#d4d4d4;"></div>
<div class="r" style="left:394.3px;top:208.0px;width:0.9px;height:16.5px;background:#d4d4d4;"></div>
<div class="r" style="left:555.3px;top:207.0px;width:0.9px;height:18.0px;background:#d4d4d4;"></div>
<svg class="r" style="left:13.0px;top:176.0px;" width="26" height="29" viewBox="0 0 26 29"><rect x="1" y="4.500" width="17.500" height="21" rx="1.200" fill="#f2c572"/><path d="M5.500 5c0-2 1.500-3 4-3s4 1 4 3v1.300h-8z" fill="#6e6e6e"/><circle cx="9.500" cy="4" r="0.900" fill="#f3f3f3"/><path d="M13.500 14.500h6.500l3.800 3.800v9.500h-10.300z" fill="#ffffff" stroke="#7a7a7a" stroke-width="1"/><path d="M20 14.500v3.800h3.800" fill="none" stroke="#7a7a7a" stroke-width="0.900"/></svg>
<span class="t" style="left:3.3px;top:206.7px;font-size:10px;line-height:12.0px;color:#2b2b2b;transform:scaleX(0.937);">Вставить</span>
<svg class="r" style="left:19.5px;top:221.4px;" width="6.4" height="4.5" viewBox="0 0 6.4 4.5"><path d="M1 1L3.2 3.5L5.4 1" fill="none" stroke="#444" stroke-width="1.25"/></svg>
<svg class="r" style="left:48.0px;top:177.5px;" width="12" height="12" viewBox="0 0 12 12"><path d="M2.500 0.500L8.300 8M9.500 0.500L3.700 8" stroke="#5a5a5a" stroke-width="1.200" fill="none"/><circle cx="2.800" cy="9.300" r="1.900" fill="none" stroke="#3f78c4" stroke-width="1.100"/><circle cx="9.200" cy="9.300" r="1.900" fill="none" stroke="#3f78c4" stroke-width="1.100"/></svg>
<svg class="r" style="left:47.5px;top:196.0px;" width="13" height="13" viewBox="0 0 13 13"><path d="M1 0.600h5l2 2v6.500h-7z" fill="#f3f3f3" stroke="#707070" stroke-width="0.900"/><path d="M5 4h5l2.300 2.300v6.200h-7.300z" fill="#ffffff" stroke="#707070" stroke-width="0.900"/><path d="M6.800 8h3.500M6.800 10h3.500" stroke="#8a8a8a" stroke-width="0.800"/></svg>
<svg class="r" style="left:66.1px;top:200.4px;" width="6.4" height="4.5" viewBox="0 0 6.4 4.5"><path d="M1 1L3.2 3.5L5.4 1" fill="none" stroke="#444" stroke-width="1.25"/></svg>
<svg class="r" style="left:49.5px;top:216.5px;" width="12" height="11" viewBox="0 0 12 11"><path d="M8.500 0.800l2.600 2.600-3 2.400-2-2z" fill="#6a6a6a"/><path d="M6 3.800l2.300 2.300-4.500 4.200-3.300-0.300 1.500-2.200z" fill="#eeb04e"/></svg>
<span class="t" style="left:3.6px;top:236.6px;font-size:9px;line-height:10.8px;color:#444444;transform:scaleX(0.935);">Буфер обмена</span>
<svg class="r" style="left:73.0px;top:238.0px;" width="7" height="7" viewBox="0 0 7 7"><path d="M0.500 6V0.500H6" fill="none" stroke="#8a8a8a" stroke-width="0.900"/><path d="M2.500 2.500L6 6M6 3.300V6H3.300" fill="none" stroke="#8a8a8a" stroke-width="0.900"/></svg>
<svg class="r" style="left:96.5px;top:177.0px;" width="28" height="24" viewBox="0 0 28 24"><rect x="3.500" y="3.500" width="22.500" height="18.500" rx="1.500" fill="#fbfbfb" stroke="#9a9a9a" stroke-width="1.100"/><rect x="7" y="8" width="15.500" height="4.500" fill="#c8c8c8"/><rect x="7" y="15.500" width="2" height="2" fill="#b0b0b0"/><rect x="10.500" y="15.500" width="12" height="2" fill="#c8c8c8"/><g stroke="#f0a030" stroke-width="1"><path d="M4 0v8M0 4h8M1.200 1.200l5.600 5.600M6.800 1.200L1.200 6.800"/></g><circle cx="4" cy="4" r="1.800" fill="#f6c36a"/></svg>
<span class="t" style="left:91.6px;top:206.7px;font-size:10px;line-height:12.0px;color:#2b2b2b;transform:scaleX(0.955);">Создать</span>
<span class="t" style="left:92.5px;top:218.7px;font-size:10px;line-height:12.0px;color:#2b2b2b;transform:scaleX(0.945);">слайд</span>
<svg class="r" style="left:120.8px;top:221.6px;" width="6.4" height="4.5" viewBox="0 0 6.4 4.5"><path d="M1 1L3.2 3.5L5.4 1" fill="none" stroke="#444" stroke-width="1.25"/></svg>
<svg class="r" style="left:132.0px;top:177.5px;" width="14" height="12" viewBox="0 0 14 12"><rect x="0.600" y="0.600" width="12.800" height="10.300" fill="#fafafa" stroke="#777" stroke-width="1"/><rect x="2.500" y="2.500" width="9" height="2" fill="#a0a0a0"/><rect x="2.500" y="6" width="3.500" height="3" fill="#b0b0b0"/><rect x="7.500" y="6" width="4" height="1" fill="#a0a0a0"/><rect x="7.500" y="8" width="4" height="1" fill="#a0a0a0"/></svg>
<span class="t" style="left:148.7px;top:178.3px;font-size:10px;line-height:12.0px;color:#2b2b2b;transform:scaleX(0.964);">Макет</span>
<svg class="r" style="left:178.2px;top:181.2px;" width="6.4" height="4.5" viewBox="0 0 6.4 4.5"><path d="M1 1L3.2 3.5L5.4 1" fill="none" stroke="#444" stroke-width="1.25"/></svg>
<svg class="r" style="left:132.0px;top:196.0px;" width="14" height="13" viewBox="0 0 14 13"><rect x="3" y="3.500" width="10.400" height="8.800" fill="#e9e9e9" stroke="#8a8a8a" stroke-width="1"/><rect x="5" y="6" width="6.500" height="1.500" fill="#b5b5b5"/><path d="M1 5.500c0-3 2-4.500 5-4.300" fill="none" stroke="#2f6fc0" stroke-width="1.400"/><path d="M0 2.500l1 3.500 3-1.800z" fill="#2f6fc0"/></svg>
<span class="t" style="left:148.7px;top:198.2px;font-size:10px;line-height:12.0px;color:#2b2b2b;transform:scaleX(0.973);">Восстановить</span>
<svg class="r" style="left:132.0px;top:215.5px;" width="14" height="13" viewBox="0 0 14 13"><rect x="4" y="5" width="9.400" height="7.300" fill="#fafafa" stroke="#777" stroke-width="1"/><rect x="4" y="5" width="9.400" height="2" fill="#9a9a9a"/><rect x="3" y="1.200" width="10" height="1.600" fill="#e9a444"/><rect x="0.500" y="0.500" width="2.600" height="2.600" fill="#f3f3f3" stroke="#e9a444" stroke-width="0.800"/></svg>
<span class="t" style="left:148.7px;top:217.3px;font-size:10px;line-height:12.0px;color:#2b2b2b;transform:scaleX(0.935);">Раздел</span>
<svg class="r" style="left:181.8px;top:220.2px;" width="6.4" height="4.5" viewBox="0 0 6.4 4.5"><path d="M1 1L3.2 3.5L5.4 1" fill="none" stroke="#444" stroke-width="1.25"/></svg>
<span class="t" style="left:139.3px;top:236.6px;font-size:9px;line-height:10.8px;color:#444444;transform:scaleX(0.850);">Слайды</span>
<div class="r" style="left:230.5px;top:181.0px;width:128.0px;height:18.5px;background:#e3e3e3;border:1px solid #d6d6d6;"></div>
<div class="r" style="left:347.5px;top:181.0px;width:1.0px;height:18.5px;background:#d0d0d0;"></div>
<div class="r" style="left:359.7px;top:181.0px;width:38.0px;height:18.5px;background:#e3e3e3;border:1px solid #d6d6d6;"></div>
<div class="r" style="left:386.0px;top:181.0px;width:1.0px;height:18.5px;background:#d0d0d0;"></div>
<svg class="r" style="left:350.2px;top:188.0px;" width="5.5" height="4" viewBox="0 0 5.5 4"><path d="M1 1L2.75 3L4.5 1" fill="none" stroke="#a8a8a8" stroke-width="0.9"/></svg>
<svg class="r" style="left:389.2px;top:188.0px;" width="5.5" height="4" viewBox="0 0 5.5 4"><path d="M1 1L2.75 3L4.5 1" fill="none" stroke="#a8a8a8" stroke-width="0.9"/></svg>
<span class="t" style="left:405.0px;top:184.7px;font-size:11px;line-height:13.2px;color:#9c9c9c;transform:scaleX(1.021);">A</span>
<svg class="r" style="left:411.0px;top:184.0px;" width="5" height="4" viewBox="0 0 5 4"><path d="M0.500 3L2.500 0.800L4.500 3" fill="none" stroke="#9c9c9c" stroke-width="0.900"/></svg>
<span class="t" style="left:424.0px;top:185.7px;font-size:10px;line-height:12.0px;color:#9c9c9c;transform:scaleX(0.974);">A</span>
<svg class="r" style="left:430.0px;top:184.0px;" width="5" height="4" viewBox="0 0 5 4"><path d="M0.500 0.800L2.500 3L4.500 0.800" fill="none" stroke="#9c9c9c" stroke-width="0.900"/></svg>
<span class="t" style="left:447.0px;top:183.7px;font-size:9px;line-height:10.8px;color:#9c9c9c;">A</span>
<svg class="r" style="left:449.0px;top:186.0px;" width="11" height="11" viewBox="0 0 11 11"><path d="M4 6.500L8 2.500L10.500 5L6.500 9z" fill="#9c9c9c"/><path d="M3.200 7.300L5.700 9.800L4 10.500L2.500 9z" fill="#c9a0c9"/></svg>
<span class="t" style="left:235.0px;top:209.9px;font-size:11.5px;line-height:13.8px;color:#9c9c9c;font-weight:bold;">Ж</span>
<span class="t" style="left:255.4px;top:209.9px;font-size:11.5px;line-height:13.8px;color:#9c9c9c;font-style:italic;transform:scaleX(1.194);">К</span>
<span class="t" style="left:275.3px;top:209.9px;font-size:11.5px;line-height:13.8px;color:#9c9c9c;transform:scaleX(1.069);text-decoration:underline;">Ч</span>
<span class="t" style="left:296.0px;top:209.9px;font-size:11.5px;line-height:13.8px;color:#9c9c9c;font-weight:bold;transform:scaleX(0.978);text-shadow:1px 1px 0 #d0d0d0;">S</span>
<span class="t" style="left:312.5px;top:212.0px;font-size:8.5px;line-height:10.2px;color:#9c9c9c;transform:scaleX(0.984);text-decoration:line-through;">abc</span>
<span class="t" style="left:333.4px;top:209.5px;font-size:9.5px;line-height:11.4px;color:#9c9c9c;transform:scaleX(0.969);">AV</span>
<svg class="r" style="left:333.0px;top:220.0px;" width="12" height="4" viewBox="0 0 12 4"><path d="M0.500 2h11M2.200 0.400L0.500 2l1.700 1.600M9.800 0.400L11.500 2l-1.700 1.600" fill="none" stroke="#9c9c9c" stroke-width="0.800"/></svg>
<svg class="r" style="left:349.2px;top:213.8px;" width="6.4" height="4.5" viewBox="0 0 6.4 4.5"><path d="M1 1L3.2 3.5L5.4 1" fill="none" stroke="#9c9c9c" stroke-width="1.25"/></svg>
<span class="t" style="left:366.0px;top:210.4px;font-size:10.5px;line-height:12.6px;color:#9c9c9c;transform:scaleX(0.856);">Aa</span>
<svg class="r" style="left:380.6px;top:213.8px;" width="6.4" height="4.5" viewBox="0 0 6.4 4.5"><path d="M1 1L3.2 3.5L5.4 1" fill="none" stroke="#9c9c9c" stroke-width="1.25"/></svg>
<svg class="r" style="left:401.0px;top:209.0px;" width="14" height="15" viewBox="0 0 14 15"><path d="M11.500 1L13 2.500L6 10L3.800 10.500L4.300 8.300z" fill="#9c9c9c"/><text x="0" y="6" font-size="5.500" fill="#9c9c9c" font-family="Liberation Sans, sans-serif">ab</text><rect x="0.500" y="12" width="12.500" height="2.300" fill="#e6e0ea"/></svg>
<svg class="r" style="left:418.8px;top:213.8px;" width="6.4" height="4.5" viewBox="0 0 6.4 4.5"><path d="M1 1L3.2 3.5L5.4 1" fill="none" stroke="#9c9c9c" stroke-width="1.25"/></svg>
<span class="t" style="left:435.4px;top:207.6px;font-size:13px;line-height:15.6px;color:#8c8c8c;">A</span>
<svg class="r" style="left:451.8px;top:213.8px;" width="6.4" height="4.5" viewBox="0 0 6.4 4.5"><path d="M1 1L3.2 3.5L5.4 1" fill="none" stroke="#9c9c9c" stroke-width="1.25"/></svg>
<span class="t" style="left:325.7px;top:236.6px;font-size:9px;line-height:10.8px;color:#444444;transform:scaleX(0.932);">Шрифт</span>
<svg class="r" style="left:458.5px;top:238.0px;" width="7" height="7" viewBox="0 0 7 7"><path d="M0.500 6V0.500H6" fill="none" stroke="#b8b8b8" stroke-width="0.900"/><path d="M2.500 2.500L6 6M6 3.300V6H3.300" fill="none" stroke="#b8b8b8" stroke-width="0.900"/></svg>
<svg class="r" style="left:478.0px;top:183.5px;" width="13" height="12" viewBox="0 0 13 12"><g fill="#9c9c9c"><circle cx="1.200" cy="1.500" r="1.100"/><circle cx="1.200" cy="6" r="1.100"/><circle cx="1.200" cy="10.500" r="1.100"/><rect x="4" y="1" width="9" height="1"/><rect x="4" y="5.500" width="9" height="1"/><rect x="4" y="10" width="9" height="1"/></g></svg>
<svg class="r" style="left:496.1px;top:187.2px;" width="6.4" height="4.5" viewBox="0 0 6.4 4.5"><path d="M1 1L3.2 3.5L5.4 1" fill="none" stroke="#9c9c9c" stroke-width="1.25"/></svg>
<svg class="r" style="left:510.5px;top:183.5px;" width="13" height="12" viewBox="0 0 13 12"><g fill="#9c9c9c"><rect x="0.500" y="0.300" width="1" height="2.600"/><rect x="0.500" y="4.700" width="1" height="2.600"/><rect x="0.500" y="9.200" width="1" height="2.600"/><rect x="4" y="1" width="9" height="1"/><rect x="4" y="5.500" width="9" height="1"/><rect x="4" y="10" width="9" height="1"/></g></svg>
<svg class="r" style="left:528.4px;top:187.2px;" width="6.4" height="4.5" viewBox="0 0 6.4 4.5"><path d="M1 1L3.2 3.5L5.4 1" fill="none" stroke="#9c9c9c" stroke-width="1.25"/></svg>
<svg class="r" style="left:543.0px;top:184.0px;" width="13.5" height="11" viewBox="0 0 13.5 11"><g fill="#9c9c9c"><rect x="0" y="0" width="13" height="1"/><rect x="6.500" y="3.300" width="6.500" height="1"/><rect x="6.500" y="6.600" width="6.500" height="1"/><rect x="0" y="10" width="13" height="1"/></g><path d="M5.500 5.500h-5M2.500 3.300L0.400 5.500l2.100 2.200" fill="none" stroke="#9c9c9c" stroke-width="1"/></svg>
<svg class="r" style="left:563.5px;top:184.0px;" width="13.5" height="11" viewBox="0 0 13.5 11"><g fill="#9c9c9c"><rect x="0" y="0" width="13" height="1"/><rect x="6.500" y="3.300" width="6.500" height="1"/><rect x="6.500" y="6.600" width="6.500" height="1"/><rect x="0" y="10" width="13" height="1"/></g><path d="M0.200 5.500h5M3.200 3.300L5.300 5.500l-2.100 2.200" fill="none" stroke="#9c9c9c" stroke-width="1"/></svg>
<svg class="r" style="left:584.0px;top:183.0px;" width="13" height="14" viewBox="0 0 13 14"><g fill="#9c9c9c"><rect x="5" y="2" width="8" height="1"/><rect x="5" y="5" width="8" height="1"/><rect x="5" y="8" width="8" height="1"/><rect x="5" y="11" width="8" height="1"/></g><path d="M2 1v12M0.300 3L2 1l1.700 2M0.300 11L2 13l1.700-2" fill="none" stroke="#9c9c9c" stroke-width="1"/></svg>
<svg class="r" style="left:599.8px;top:187.2px;" width="6.4" height="4.5" viewBox="0 0 6.4 4.5"><path d="M1 1L3.2 3.5L5.4 1" fill="none" stroke="#9c9c9c" stroke-width="1.25"/></svg>
<svg class="r" style="left:614.5px;top:177.0px;" width="13" height="13.5" viewBox="0 0 13 13.5"><path d="M1.500 0v13M4.500 0v13" stroke="#9c9c9c" stroke-width="1"/><path d="M9.500 13V1M7.700 3l1.800-2 1.800 2M7.700 11l1.800 2 1.800-2" fill="none" stroke="#9c9c9c" stroke-width="0.900"/><text x="6.500" y="7.500" font-size="6.500" fill="#9c9c9c" font-family="Liberation Sans, sans-serif">A</text></svg>
<svg class="r" style="left:630.5px;top:180.8px;" width="6.4" height="4.5" viewBox="0 0 6.4 4.5"><path d="M1 1L3.2 3.5L5.4 1" fill="none" stroke="#9c9c9c" stroke-width="1.25"/></svg>
<svg class="r" style="left:614.5px;top:196.5px;" width="13" height="12.5" viewBox="0 0 13 12.5"><rect x="0.500" y="0.500" width="12" height="11.500" fill="none" stroke="#9c9c9c" stroke-width="0.900" stroke-dasharray="2 1"/><path d="M3 6.200h7M6.500 1.500v3M5.300 3.300l1.200 1.300 1.200-1.300M6.500 11v-3M5.300 9.200l1.200-1.300 1.200 1.300" fill="none" stroke="#9c9c9c" stroke-width="0.900"/></svg>
<svg class="r" style="left:630.5px;top:200.2px;" width="6.4" height="4.5" viewBox="0 0 6.4 4.5"><path d="M1 1L3.2 3.5L5.4 1" fill="none" stroke="#9c9c9c" stroke-width="1.25"/></svg>
<svg class="r" style="left:614.5px;top:216.5px;" width="13" height="11" viewBox="0 0 13 11"><path d="M0 1h8M2 3.500h6M0 6h4" stroke="#9c9c9c" stroke-width="1.100"/><rect x="5" y="4.500" width="7.500" height="6" fill="#f3f3f3" stroke="#9c9c9c" stroke-width="0.900"/></svg>
<svg class="r" style="left:630.5px;top:219.8px;" width="6.4" height="4.5" viewBox="0 0 6.4 4.5"><path d="M1 1L3.2 3.5L5.4 1" fill="none" stroke="#9c9c9c" stroke-width="1.25"/></svg>
<svg class="r" style="left:479.3px;top:210.5px;" width="11" height="13" viewBox="0 0 11 13"><rect x="0" y="0.0" width="10.5" height="1" fill="#a8a8a8"/><rect x="0" y="3.2" width="7" height="1" fill="#a8a8a8"/><rect x="0" y="6.4" width="10.5" height="1" fill="#a8a8a8"/><rect x="0" y="9.600000000000001" width="7" height="1" fill="#a8a8a8"/></svg>
<svg class="r" style="left:498.6px;top:210.5px;" width="12" height="13" viewBox="0 0 12 13"><rect x="0" y="0.0" width="11.5" height="1" fill="#a8a8a8"/><rect x="2.2" y="3.2" width="7" height="1" fill="#a8a8a8"/><rect x="0" y="6.4" width="11.5" height="1" fill="#a8a8a8"/><rect x="2.2" y="9.600000000000001" width="7" height="1" fill="#a8a8a8"/></svg>
<svg class="r" style="left:519.0px;top:210.5px;" width="11" height="13" viewBox="0 0 11 13"><rect x="0" y="0.0" width="10.5" height="1" fill="#a8a8a8"/><rect x="3.5" y="3.2" width="7" height="1" fill="#a8a8a8"/><rect x="0" y="6.4" width="10.5" height="1" fill="#a8a8a8"/><rect x="3.5" y="9.600000000000001" width="7" height="1" fill="#a8a8a8"/></svg>
<svg class="r" style="left:538.3px;top:210.5px;" width="12" height="13" viewBox="0 0 12 13"><rect x="0" y="0.0" width="11.5" height="1" fill="#a8a8a8"/><rect x="0" y="3.2" width="11.5" height="1" fill="#a8a8a8"/><rect x="0" y="6.4" width="11.5" height="1" fill="#a8a8a8"/><rect x="0" y="9.600000000000001" width="11.5" height="1" fill="#a8a8a8"/></svg>
<svg class="r" style="left:562.4px;top:210.5px;" width="12" height="13" viewBox="0 0 12 13"><rect x="0" y="0.0" width="5" height="1" fill="#a8a8a8"/><rect x="0" y="3.2" width="5" height="1" fill="#a8a8a8"/><rect x="0" y="6.4" width="5" height="1" fill="#a8a8a8"/><rect x="0" y="9.600000000000001" width="5" height="1" fill="#a8a8a8"/></svg>
<svg class="r" style="left:569.0px;top:210.5px;" width="6" height="13" viewBox="0 0 6 13"><rect x="0" y="0.0" width="5" height="1" fill="#a8a8a8"/><rect x="0" y="3.2" width="5" height="1" fill="#a8a8a8"/><rect x="0" y="6.4" width="5" height="1" fill="#a8a8a8"/><rect x="0" y="9.600000000000001" width="5" height="1" fill="#a8a8a8"/></svg>
<svg class="r" style="left:578.3px;top:213.2px;" width="6.4" height="4.5" viewBox="0 0 6.4 4.5"><path d="M1 1L3.2 3.5L5.4 1" fill="none" stroke="#9c9c9c" stroke-width="1.25"/></svg>
<span class="t" style="left:539.4px;top:236.6px;font-size:9px;line-height:10.8px;color:#444444;transform:scaleX(0.947);">Абзац</span>
<svg class="r" style="left:638.5px;top:238.0px;" width="7" height="7" viewBox="0 0 7 7"><path d="M0.500 6V0.500H6" fill="none" stroke="#b8b8b8" stroke-width="0.900"/><path d="M2.500 2.500L6 6M6 3.300V6H3.300" fill="none" stroke="#b8b8b8" stroke-width="0.900"/></svg>
<div class="r" style="left:656.0px;top:177.3px;width:109.5px;height:51.2px;background:#ffffff;border:1px solid #d2d2d2;"></div>
<div class="r" style="left:753.4px;top:177.3px;width:12.1px;height:18.0px;background:#dcdcdc;border:1px solid #d2d2d2;"></div>
<div class="r" style="left:753.4px;top:195.0px;width:12.1px;height:16.5px;background:#fdfdfd;border:1px solid #d2d2d2;"></div>
<div class="r" style="left:753.4px;top:211.0px;width:12.1px;height:17.5px;background:#fdfdfd;border:1px solid #d2d2d2;"></div>
<svg class="r" style="left:757.5px;top:185.0px;" width="4" height="3" viewBox="0 0 4 3"><path d="M0 2.500L2 0.500L4 2.500z" fill="#bdbdbd"/></svg>
<svg class="r" style="left:757.5px;top:202.0px;" width="4" height="3" viewBox="0 0 4 3"><path d="M0 0.500L2 2.500L4 0.500z" fill="#555"/></svg>
<svg class="r" style="left:756.5px;top:216.0px;" width="6" height="7" viewBox="0 0 6 7"><path d="M0.500 0.800h5M0.500 2.600h5" stroke="#555" stroke-width="0.900"/><path d="M0.800 4.200L3 6.400L5.200 4.200z" fill="#555"/></svg>
<svg class="r" style="left:658.0px;top:179.8px;" width="13" height="13" viewBox="0 0 13 13"><rect x="0.500" y="1.500" width="12" height="9.500" fill="#e8e8e8" stroke="#8a8a8a" stroke-width="0.900"/><text x="2" y="7" font-size="5.500" font-weight="bold" fill="#3a5fb0" font-family="Liberation Sans, sans-serif">A</text><path d="M7 4h4M7 6h4M2 9h9" stroke="#9a9a9a" stroke-width="0.700"/></svg>
<svg class="r" style="left:674.3px;top:179.8px;" width="13" height="13" viewBox="0 0 13 13"><path d="M1 1L12 12" fill="none" stroke="#5c5c5c" stroke-width="1"/></svg>
<svg class="r" style="left:690.1px;top:179.8px;" width="13" height="13" viewBox="0 0 13 13"><path d="M1 1L12 12M12 8v4h-4" fill="none" stroke="#5c5c5c" stroke-width="1"/></svg>
<svg class="r" style="left:706.1px;top:179.8px;" width="13" height="13" viewBox="0 0 13 13"><rect x="0.700" y="2.200" width="11.600" height="8.600" fill="none" stroke="#5c5c5c" stroke-width="1"/></svg>
<svg class="r" style="left:722.0px;top:179.8px;" width="13" height="13" viewBox="0 0 13 13"><ellipse cx="6.500" cy="6.500" rx="6" ry="4.500" fill="none" stroke="#5c5c5c" stroke-width="1"/></svg>
<svg class="r" style="left:737.8px;top:179.8px;" width="13" height="13" viewBox="0 0 13 13"><rect x="0.700" y="2.200" width="11.600" height="8.600" rx="2.500" fill="none" stroke="#5c5c5c" stroke-width="1"/></svg>
<svg class="r" style="left:658.0px;top:196.5px;" width="13" height="13" viewBox="0 0 13 13"><path d="M6.500 1.500L12 11.500H1z" fill="none" stroke="#5c5c5c" stroke-width="1"/></svg>
<svg class="r" style="left:674.3px;top:196.5px;" width="13" height="13" viewBox="0 0 13 13"><path d="M1 2h5.500v9H12" fill="none" stroke="#5c5c5c" stroke-width="1"/></svg>
<svg class="r" style="left:690.1px;top:196.5px;" width="13" height="13" viewBox="0 0 13 13"><path d="M1 2h5.500v9H12M10 9l2 2-2 2" fill="none" stroke="#5c5c5c" stroke-width="1"/></svg>
<svg class="r" style="left:706.1px;top:196.5px;" width="13" height="13" viewBox="0 0 13 13"><path d="M1 4.500h6V1.500L12.300 6.500 7 11.500V8.500H1z" fill="none" stroke="#5c5c5c" stroke-width="1"/></svg>
<svg class="r" style="left:722.0px;top:196.5px;" width="13" height="13" viewBox="0 0 13 13"><path d="M4 1h5v6h3L6.500 12.300 1 7h3z" fill="none" stroke="#5c5c5c" stroke-width="1"/></svg>
<svg class="r" style="left:737.8px;top:196.5px;" width="13" height="13" viewBox="0 0 13 13"><path d="M1 12V5c0-2.500 1.500-4 4-4h3.500v4H12v7z" fill="none" stroke="#5c5c5c" stroke-width="1"/></svg>
<svg class="r" style="left:658.0px;top:212.1px;" width="13" height="13" viewBox="0 0 13 13"><path d="M3 1c2 1.500-2 3 0.500 4.500s3 0.500 4 2.500-3 2-2 3.500M2 9l3.500 3M8 10.500l-2.500 1.500" fill="none" stroke="#5c5c5c" stroke-width="1"/></svg>
<svg class="r" style="left:674.3px;top:212.1px;" width="13" height="13" viewBox="0 0 13 13"><path d="M1 2c6 0 10 4 10.500 10.500" fill="none" stroke="#5c5c5c" stroke-width="1"/></svg>
<svg class="r" style="left:690.1px;top:212.1px;" width="13" height="13" viewBox="0 0 13 13"><path d="M0.500 11c3-9 5-9 6.500-4s3.500 5.500 5.500 4.500" fill="none" stroke="#5c5c5c" stroke-width="1"/></svg>
<svg class="r" style="left:706.1px;top:212.1px;" width="13" height="13" viewBox="0 0 13 13"><path d="M8.500 1c-2 0-2.500 0.800-2.500 2.200v1.600c0 1-0.500 1.700-1.700 1.700 1.200 0 1.700 0.700 1.700 1.700v1.600c0 1.400 0.500 2.200 2.500 2.200" fill="none" stroke="#5c5c5c" stroke-width="1"/></svg>
<svg class="r" style="left:722.0px;top:212.1px;" width="13" height="13" viewBox="0 0 13 13"><path d="M4.500 1c2 0 2.500 0.800 2.500 2.200v1.600c0 1 0.500 1.700 1.700 1.700-1.200 0-1.700 0.700-1.700 1.700v1.600c0 1.400-0.500 2.200-2.500 2.200" fill="none" stroke="#5c5c5c" stroke-width="1"/></svg>
<svg class="r" style="left:737.8px;top:212.1px;" width="13" height="13" viewBox="0 0 13 13"><path d="M6.500 0.800l1.700 3.900 4.100 0.300-3.100 2.700 1 4.100-3.700-2.200-3.700 2.200 1-4.100L0.700 5l4.100-0.300z" fill="none" stroke="#5c5c5c" stroke-width="1"/></svg>
<svg class="r" style="left:787.0px;top:177.5px;" width="26" height="25" viewBox="0 0 26 25"><rect x="6.500" y="6" width="13" height="13.500" fill="#f5c26c"/><rect x="1" y="1" width="10.500" height="10.500" fill="#ffffff" stroke="#8c8c8c" stroke-width="1"/><rect x="13.500" y="13" width="10.500" height="10.500" fill="#ffffff" stroke="#8c8c8c" stroke-width="1"/></svg>
<span class="t" style="left:769.7px;top:206.7px;font-size:10px;line-height:12.0px;color:#1e1e1e;transform:scaleX(1.022);-webkit-text-stroke:0.450px #1e1e1e;">Упорядочить</span>
<svg class="r" style="left:796.4px;top:221.6px;" width="6.4" height="4.5" viewBox="0 0 6.4 4.5"><path d="M1 1L3.2 3.5L5.4 1" fill="none" stroke="#444" stroke-width="1.25"/></svg>
<svg class="r" style="left:844.0px;top:177.0px;" width="27" height="27" viewBox="0 0 27 27"><rect x="1.500" y="1" width="22" height="21.500" rx="5" fill="#f5eff5" stroke="#d6ccd6" stroke-width="1.200"/><path d="M24.500 8.500L16 19.500" stroke="#b4b4b4" stroke-width="2.600"/><path d="M16.500 18.500c-2.500 0.500-3 3-6 5 3.500 1 7-0.500 7.500-4z" fill="#bcbcbc"/></svg>
<span class="t" style="left:834.5px;top:206.7px;font-size:10px;line-height:12.0px;color:#b2b2b2;transform:scaleX(0.967);">Экспресс-</span>
<span class="t" style="left:839.6px;top:218.7px;font-size:10px;line-height:12.0px;color:#b2b2b2;transform:scaleX(0.933);">стили</span>
<svg class="r" style="left:867.8px;top:221.6px;" width="6.4" height="4.5" viewBox="0 0 6.4 4.5"><path d="M1 1L3.2 3.5L5.4 1" fill="none" stroke="#b2b2b2" stroke-width="1.25"/></svg>
<svg class="r" style="left:885.5px;top:176.5px;" width="12" height="12" viewBox="0 0 12 12"><path d="M4.500 2.500L9.500 7.500L6 11L1 6z" fill="none" stroke="#b2b2b2" stroke-width="1"/><path d="M3.500 3.500V1.500c0-1 2-1 2 0v3" fill="none" stroke="#b2b2b2" stroke-width="0.900"/><path d="M10.500 8c0.800 1.200 1.200 1.800 1.200 2.500a1.200 1.200 0 0 1-2.400 0c0-0.700 0.400-1.300 1.200-2.500z" fill="#b2b2b2"/></svg>
<span class="t" style="left:900.7px;top:178.3px;font-size:10px;line-height:12.0px;color:#b2b2b2;transform:scaleX(0.960);">Заливка фигуры</span>
<svg class="r" style="left:976.8px;top:181.2px;" width="6.4" height="4.5" viewBox="0 0 6.4 4.5"><path d="M1 1L3.2 3.5L5.4 1" fill="none" stroke="#b2b2b2" stroke-width="1.25"/></svg>
<svg class="r" style="left:884.0px;top:196.5px;" width="14" height="11" viewBox="0 0 14 11"><path d="M10 2.500H0.800v7.500H10" fill="none" stroke="#b2b2b2" stroke-width="1"/><path d="M12.800 0.500L6 8l-1.800 0.600 0.500-1.900L11.500 -0.500z" fill="#b2b2b2"/></svg>
<span class="t" style="left:900.7px;top:198.2px;font-size:10px;line-height:12.0px;color:#b2b2b2;transform:scaleX(0.985);">Контур фигуры</span>
<svg class="r" style="left:972.2px;top:201.2px;" width="6.4" height="4.5" viewBox="0 0 6.4 4.5"><path d="M1 1L3.2 3.5L5.4 1" fill="none" stroke="#b2b2b2" stroke-width="1.25"/></svg>
<svg class="r" style="left:885.0px;top:216.5px;" width="13" height="11" viewBox="0 0 13 11"><path d="M3.500 1h8v6.500l-2.500 3h-8V4z" fill="#c4c4c4"/><rect x="1.500" y="3.800" width="7.800" height="6" rx="1" fill="#f3f3f3" stroke="#b2b2b2" stroke-width="0.900"/></svg>
<span class="t" style="left:900.7px;top:217.3px;font-size:10px;line-height:12.0px;color:#b2b2b2;transform:scaleX(0.914);">Эффекты фигуры</span>
<svg class="r" style="left:979.8px;top:220.2px;" width="6.4" height="4.5" viewBox="0 0 6.4 4.5"><path d="M1 1L3.2 3.5L5.4 1" fill="none" stroke="#b2b2b2" stroke-width="1.25"/></svg>
<span class="t" style="left:796.4px;top:236.6px;font-size:9px;line-height:10.8px;color:#444444;transform:scaleX(0.905);">Рисование</span>
<svg class="r" style="left:989.0px;top:238.0px;" width="7" height="7" viewBox="0 0 7 7"><path d="M0.500 6V0.500H6" fill="none" stroke="#b8b8b8" stroke-width="0.900"/><path d="M2.500 2.500L6 6M6 3.300V6H3.300" fill="none" stroke="#b8b8b8" stroke-width="0.900"/></svg>
<svg class="r" style="left:1009.0px;top:177.5px;" width="13" height="13" viewBox="0 0 13 13"><circle cx="7.800" cy="5" r="4" fill="none" stroke="#2f6fc6" stroke-width="1.500"/><path d="M5 8L0.800 12.200" stroke="#2f6fc6" stroke-width="1.700"/></svg>
<span class="t" style="left:1025.0px;top:178.7px;font-size:10px;line-height:12.0px;color:#2b2b2b;transform:scaleX(0.970);">Найти</span>
<svg class="r" style="left:1009.0px;top:196.0px;" width="13" height="13" viewBox="0 0 13 13"><text x="2" y="6" font-size="6.500" fill="#7a3fa0" font-family="Liberation Sans, sans-serif">ab</text><text x="5" y="12.500" font-size="6.500" fill="#2f6fc6" font-family="Liberation Sans, sans-serif">ac</text><path d="M0.500 8v2.500h3.500M2.800 9L4.200 10.500 2.800 12" fill="none" stroke="#2f6fc6" stroke-width="0.800"/></svg>
<span class="t" style="left:1025.0px;top:198.1px;font-size:10px;line-height:12.0px;color:#2b2b2b;transform:scaleX(0.979);">Заменить</span>
<svg class="r" style="left:1077.3px;top:200.8px;" width="6.4" height="4.5" viewBox="0 0 6.4 4.5"><path d="M1 1L3.2 3.5L5.4 1" fill="none" stroke="#444" stroke-width="1.25"/></svg>
<svg class="r" style="left:1012.0px;top:216.5px;" width="9" height="12" viewBox="0 0 9 12"><path d="M0.800 0.800v9l2.300-2 1.600 3.500 1.400-0.600-1.600-3.400 3-0.200z" fill="#fdfdfd" stroke="#6e6e6e" stroke-width="0.900"/></svg>
<span class="t" style="left:1025.0px;top:217.2px;font-size:10px;line-height:12.0px;color:#2b2b2b;transform:scaleX(0.954);">Выделить</span>
<svg class="r" style="left:1070.8px;top:220.2px;" width="6.4" height="4.5" viewBox="0 0 6.4 4.5"><path d="M1 1L3.2 3.5L5.4 1" fill="none" stroke="#444" stroke-width="1.25"/></svg>
<span class="t" style="left:1015.0px;top:236.6px;font-size:9px;line-height:10.8px;color:#444444;transform:scaleX(0.929);">Редактирование</span>
<div class="r" style="left:1125.2px;top:184.5px;width:9.0px;height:9.0px;background:#ff8a00;border-radius:50%;"></div>
<span class="t" style="left:1102.7px;top:206.9px;font-size:10px;line-height:12.0px;color:#2b2b2b;">Надстройки</span>
<span class="t" style="left:1106.5px;top:236.6px;font-size:9px;line-height:10.8px;color:#444444;transform:scaleX(0.941);">Надстройки</span>
<svg class="r" style="left:1250.5px;top:240.0px;" width="10" height="6" viewBox="0 0 10 6"><path d="M0.800 5.200L5 1L9.200 5.200" fill="none" stroke="#555" stroke-width="1.100"/></svg>
</div>
</body>
</html>
